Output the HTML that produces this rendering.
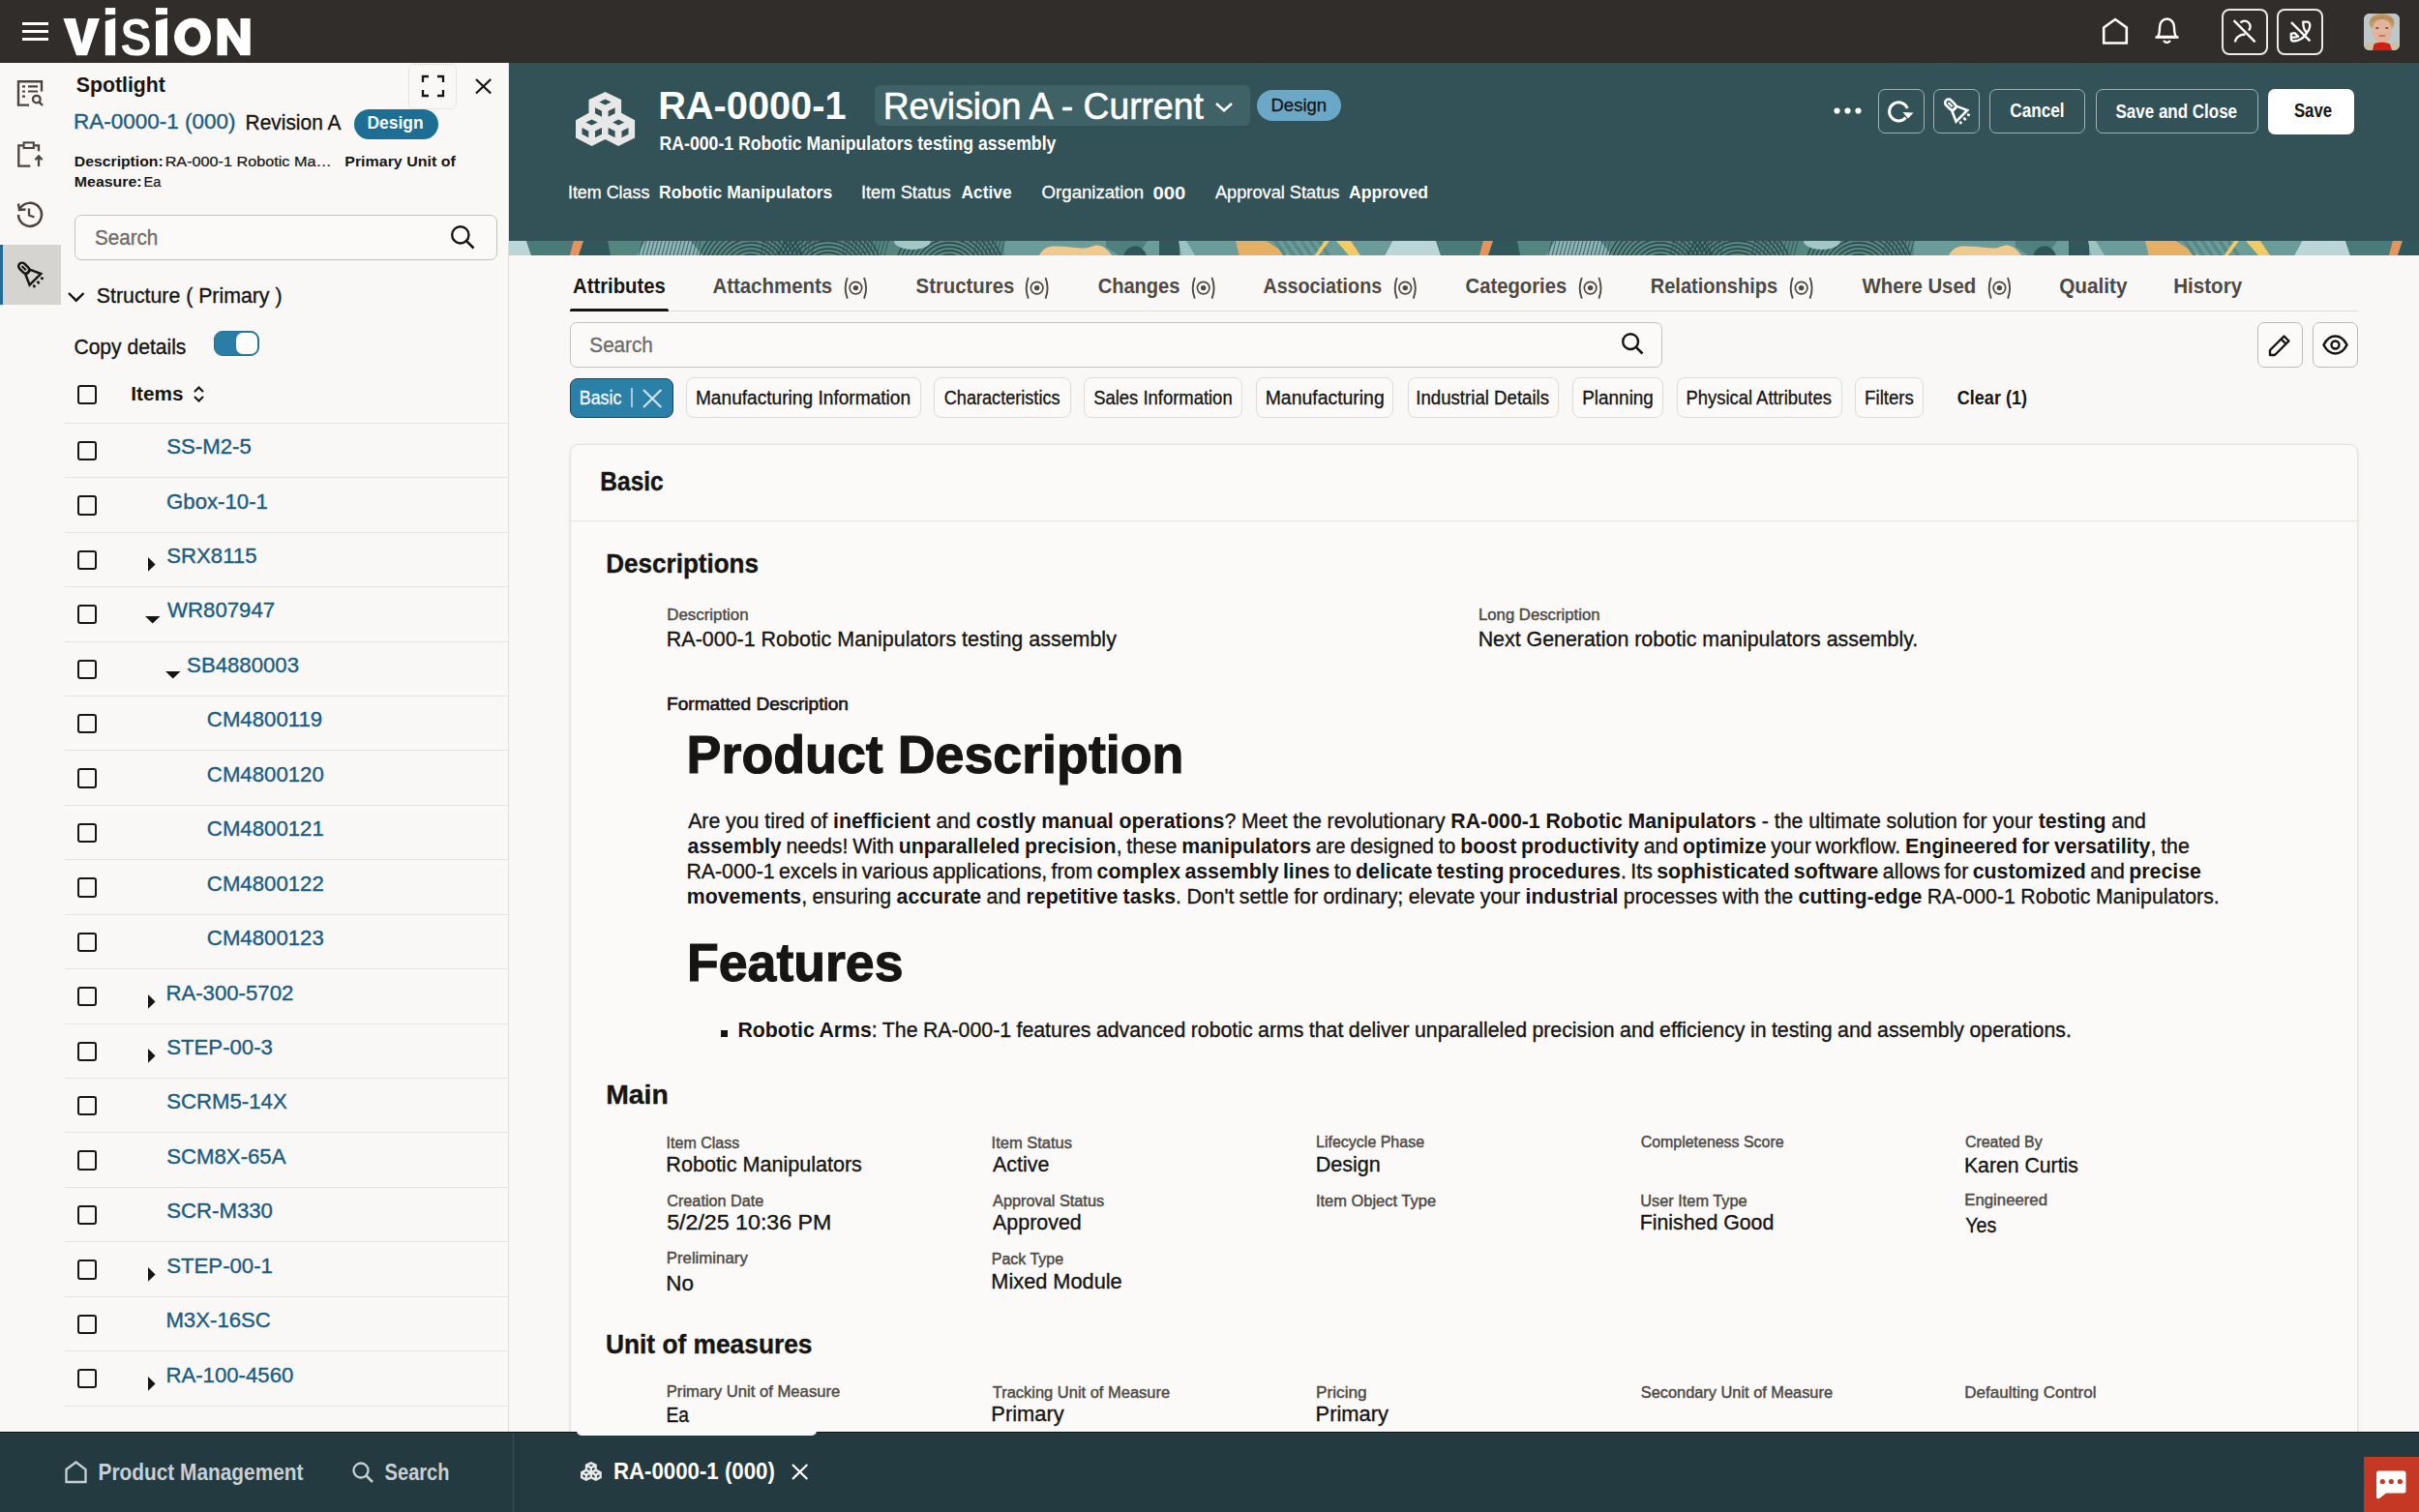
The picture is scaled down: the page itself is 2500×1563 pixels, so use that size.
<!DOCTYPE html><html><head><meta charset="utf-8"><style>
*{box-sizing:border-box;margin:0;padding:0}
html,body{width:2500px;height:1563px;overflow:hidden;background:#f9f8f6;font-family:"Liberation Sans",sans-serif}
.t{position:absolute;white-space:pre}
.a{position:absolute}
b{font-weight:700}
svg{position:absolute;overflow:visible}
</style></head><body><div class="a" style="left:0px;top:0px;width:2500px;height:65px;background:#312d2a"></div><div class="a" style="left:0px;top:65px;width:526px;height:1415px;background:#f9f8f6"></div><div class="a" style="left:0px;top:253px;width:63px;height:62px;background:#d6d4d1"></div><div class="a" style="left:0px;top:253px;width:3px;height:62px;background:#1f6b95"></div><div class="a" style="left:525px;top:65px;width:1px;height:1415px;background:#e3e0dc"></div><div class="a" style="left:526px;top:65px;width:1974px;height:184px;background:#325257"></div><svg style="left:0;top:0" width="2500" height="265"><defs><clipPath id="cp"><rect x="526" y="249" width="1974" height="15"/></clipPath><clipPath id="arcclip"><rect x="188" y="0" width="324" height="15"/></clipPath></defs><g clip-path="url(#cp)"><g transform="translate(526,249)"><rect x="0" y="0" width="940" height="15" fill="#5f918d"/><rect x="100" y="0" width="412" height="15" fill="#55857f"/><rect x="512" y="0" width="401" height="15" fill="#6a9c99"/><polygon points="-26.5,0 18,0 23,15 -34.5,15" fill="#bcd6d8"/><polygon points="913.5,0 958,0 963,15 905.5,15" fill="#bcd6d8"/><polygon points="18,0 67,0 63,15 23,15" fill="#497c79"/><polygon points="67,0 77,0 72,15 63,15" fill="#e8935a"/><polygon points="77,0 102,0 105,15 72,15" fill="#30585b"/><polygon points="141,0 188,0 200,15 132,15" fill="#8db8b7"/><g clip-path="url(#arcclip)"><circle cx="250" cy="34" r="20" fill="none" stroke="#213d3f" stroke-width="1.3" opacity="0.9"/><circle cx="250" cy="34" r="24" fill="none" stroke="#213d3f" stroke-width="1.3" opacity="0.9"/><circle cx="250" cy="34" r="28" fill="none" stroke="#213d3f" stroke-width="1.3" opacity="0.9"/><circle cx="250" cy="34" r="32" fill="none" stroke="#213d3f" stroke-width="1.3" opacity="0.9"/><circle cx="250" cy="34" r="36" fill="none" stroke="#213d3f" stroke-width="1.3" opacity="0.9"/><circle cx="250" cy="34" r="40" fill="none" stroke="#213d3f" stroke-width="1.3" opacity="0.9"/><circle cx="250" cy="34" r="44" fill="none" stroke="#213d3f" stroke-width="1.3" opacity="0.9"/><circle cx="250" cy="34" r="48" fill="none" stroke="#213d3f" stroke-width="1.3" opacity="0.9"/><circle cx="250" cy="34" r="52" fill="none" stroke="#213d3f" stroke-width="1.3" opacity="0.9"/><circle cx="250" cy="34" r="56" fill="none" stroke="#213d3f" stroke-width="1.3" opacity="0.9"/><circle cx="330" cy="36" r="20" fill="none" stroke="#213d3f" stroke-width="1.3" opacity="0.9"/><circle cx="330" cy="36" r="24" fill="none" stroke="#213d3f" stroke-width="1.3" opacity="0.9"/><circle cx="330" cy="36" r="28" fill="none" stroke="#213d3f" stroke-width="1.3" opacity="0.9"/><circle cx="330" cy="36" r="32" fill="none" stroke="#213d3f" stroke-width="1.3" opacity="0.9"/><circle cx="330" cy="36" r="36" fill="none" stroke="#213d3f" stroke-width="1.3" opacity="0.9"/><circle cx="330" cy="36" r="40" fill="none" stroke="#213d3f" stroke-width="1.3" opacity="0.9"/><circle cx="330" cy="36" r="44" fill="none" stroke="#213d3f" stroke-width="1.3" opacity="0.9"/><circle cx="330" cy="36" r="48" fill="none" stroke="#213d3f" stroke-width="1.3" opacity="0.9"/><circle cx="330" cy="36" r="52" fill="none" stroke="#213d3f" stroke-width="1.3" opacity="0.9"/><circle cx="330" cy="36" r="56" fill="none" stroke="#213d3f" stroke-width="1.3" opacity="0.9"/><circle cx="455" cy="34" r="20" fill="none" stroke="#213d3f" stroke-width="1.3" opacity="0.9"/><circle cx="455" cy="34" r="24" fill="none" stroke="#213d3f" stroke-width="1.3" opacity="0.9"/><circle cx="455" cy="34" r="28" fill="none" stroke="#213d3f" stroke-width="1.3" opacity="0.9"/><circle cx="455" cy="34" r="32" fill="none" stroke="#213d3f" stroke-width="1.3" opacity="0.9"/><circle cx="455" cy="34" r="36" fill="none" stroke="#213d3f" stroke-width="1.3" opacity="0.9"/><circle cx="455" cy="34" r="40" fill="none" stroke="#213d3f" stroke-width="1.3" opacity="0.9"/><circle cx="455" cy="34" r="44" fill="none" stroke="#213d3f" stroke-width="1.3" opacity="0.9"/><circle cx="455" cy="34" r="48" fill="none" stroke="#213d3f" stroke-width="1.3" opacity="0.9"/><circle cx="455" cy="34" r="52" fill="none" stroke="#213d3f" stroke-width="1.3" opacity="0.9"/><circle cx="455" cy="34" r="56" fill="none" stroke="#213d3f" stroke-width="1.3" opacity="0.9"/></g><path d="M134,15 L138,0" stroke="#2f5558" stroke-width="1.1" opacity="0.8"/><path d="M138,15 L142,0" stroke="#2f5558" stroke-width="1.1" opacity="0.8"/><path d="M142,15 L146,0" stroke="#2f5558" stroke-width="1.1" opacity="0.8"/><path d="M146,15 L150,0" stroke="#2f5558" stroke-width="1.1" opacity="0.8"/><path d="M150,15 L154,0" stroke="#2f5558" stroke-width="1.1" opacity="0.8"/><path d="M154,15 L158,0" stroke="#2f5558" stroke-width="1.1" opacity="0.8"/><path d="M158,15 L162,0" stroke="#2f5558" stroke-width="1.1" opacity="0.8"/><path d="M162,15 L166,0" stroke="#2f5558" stroke-width="1.1" opacity="0.8"/><path d="M166,15 L170,0" stroke="#2f5558" stroke-width="1.1" opacity="0.8"/><path d="M170,15 L174,0" stroke="#2f5558" stroke-width="1.1" opacity="0.8"/><path d="M174,15 L178,0" stroke="#2f5558" stroke-width="1.1" opacity="0.8"/><path d="M178,15 L182,0" stroke="#2f5558" stroke-width="1.1" opacity="0.8"/><path d="M182,15 L186,0" stroke="#2f5558" stroke-width="1.1" opacity="0.8"/><path d="M186,15 L190,0" stroke="#2f5558" stroke-width="1.1" opacity="0.8"/><path d="M190,15 L194,0" stroke="#2f5558" stroke-width="1.1" opacity="0.8"/><path d="M194,15 L198,0" stroke="#2f5558" stroke-width="1.1" opacity="0.8"/><path d="M260,15 L264,0" stroke="#2f5558" stroke-width="1.1" opacity="0.8"/><path d="M264,15 L268,0" stroke="#2f5558" stroke-width="1.1" opacity="0.8"/><path d="M268,15 L272,0" stroke="#2f5558" stroke-width="1.1" opacity="0.8"/><path d="M272,15 L276,0" stroke="#2f5558" stroke-width="1.1" opacity="0.8"/><path d="M276,15 L280,0" stroke="#2f5558" stroke-width="1.1" opacity="0.8"/><path d="M280,15 L284,0" stroke="#2f5558" stroke-width="1.1" opacity="0.8"/><path d="M284,15 L288,0" stroke="#2f5558" stroke-width="1.1" opacity="0.8"/><path d="M288,15 L292,0" stroke="#2f5558" stroke-width="1.1" opacity="0.8"/><path d="M292,15 L296,0" stroke="#2f5558" stroke-width="1.1" opacity="0.8"/><path d="M296,15 L300,0" stroke="#2f5558" stroke-width="1.1" opacity="0.8"/><path d="M300,15 L304,0" stroke="#2f5558" stroke-width="1.1" opacity="0.8"/><path d="M304,15 L308,0" stroke="#2f5558" stroke-width="1.1" opacity="0.8"/><path d="M308,15 L312,0" stroke="#2f5558" stroke-width="1.1" opacity="0.8"/><path d="M312,15 L316,0" stroke="#2f5558" stroke-width="1.1" opacity="0.8"/><path d="M344,15 L348,0" stroke="#2f5558" stroke-width="1.1" opacity="0.8"/><path d="M348,15 L352,0" stroke="#2f5558" stroke-width="1.1" opacity="0.8"/><path d="M352,15 L356,0" stroke="#2f5558" stroke-width="1.1" opacity="0.8"/><path d="M356,15 L360,0" stroke="#2f5558" stroke-width="1.1" opacity="0.8"/><path d="M360,15 L364,0" stroke="#2f5558" stroke-width="1.1" opacity="0.8"/><path d="M364,15 L368,0" stroke="#2f5558" stroke-width="1.1" opacity="0.8"/><path d="M368,15 L372,0" stroke="#2f5558" stroke-width="1.1" opacity="0.8"/><path d="M372,15 L376,0" stroke="#2f5558" stroke-width="1.1" opacity="0.8"/><path d="M376,15 L380,0" stroke="#2f5558" stroke-width="1.1" opacity="0.8"/><path d="M380,15 L384,0" stroke="#2f5558" stroke-width="1.1" opacity="0.8"/><path d="M384,15 L388,0" stroke="#2f5558" stroke-width="1.1" opacity="0.8"/><path d="M388,15 L392,0" stroke="#2f5558" stroke-width="1.1" opacity="0.8"/><path d="M480,15 L484,0" stroke="#2f5558" stroke-width="1.1" opacity="0.8"/><path d="M484,15 L488,0" stroke="#2f5558" stroke-width="1.1" opacity="0.8"/><path d="M488,15 L492,0" stroke="#2f5558" stroke-width="1.1" opacity="0.8"/><path d="M492,15 L496,0" stroke="#2f5558" stroke-width="1.1" opacity="0.8"/><path d="M496,15 L500,0" stroke="#2f5558" stroke-width="1.1" opacity="0.8"/><path d="M500,15 L504,0" stroke="#2f5558" stroke-width="1.1" opacity="0.8"/><path d="M504,15 L508,0" stroke="#2f5558" stroke-width="1.1" opacity="0.8"/><path d="M508,15 L512,0" stroke="#2f5558" stroke-width="1.1" opacity="0.8"/><ellipse cx="417" cy="0" rx="19" ry="9" fill="#a3c6c6"/><path d="M548,15 C552,8 556,6 562,5.5 C575,5 585,7.5 595,7.5 C600,7.5 603,4.5 608,4.5 C614,4.5 620,10 623,15 Z" fill="#efc98f"/><polygon points="617,0 672,0 672,15 630,15 617,6" fill="#4f807d"/><polygon points="660,0 672,0 672,15 650,15" fill="#6a9c99"/><path d="M635,15 C638,8 642,5.5 647,5.5 C652,5.5 656,8 659,15 Z" fill="#2f5558"/><polygon points="672,0 693,0 693,15 672,15" fill="#30585b"/><polygon points="692,0 700,0 709,15 695,15" fill="#9cc2c2"/><polygon points="751,0 782.5,0 806.3,15 754.7,15" fill="#e5b066"/><polygon points="790,0 794,0 804,15 800,15" fill="#578985"/><polygon points="799,0 803,0 813,15 809,15" fill="#578985"/><polygon points="808,0 812,0 822,15 818,15" fill="#578985"/><polygon points="817,0 821,0 831,15 827,15" fill="#578985"/><polygon points="826,0 830,0 840,15 836,15" fill="#578985"/><polygon points="835,0 839,0 849,15 845,15" fill="#578985"/><polygon points="843,0 848,0 837,15 832.6,15" fill="#f2cb66"/><polygon points="855,0 870,0 880,15 868,15" fill="#f2cb66"/></g><g transform="translate(1466,249)"><rect x="0" y="0" width="940" height="15" fill="#5f918d"/><rect x="100" y="0" width="412" height="15" fill="#55857f"/><rect x="512" y="0" width="401" height="15" fill="#6a9c99"/><polygon points="-26.5,0 18,0 23,15 -34.5,15" fill="#bcd6d8"/><polygon points="913.5,0 958,0 963,15 905.5,15" fill="#bcd6d8"/><polygon points="18,0 67,0 63,15 23,15" fill="#497c79"/><polygon points="67,0 77,0 72,15 63,15" fill="#e8935a"/><polygon points="77,0 102,0 105,15 72,15" fill="#30585b"/><polygon points="141,0 188,0 200,15 132,15" fill="#8db8b7"/><g clip-path="url(#arcclip)"><circle cx="250" cy="34" r="20" fill="none" stroke="#213d3f" stroke-width="1.3" opacity="0.9"/><circle cx="250" cy="34" r="24" fill="none" stroke="#213d3f" stroke-width="1.3" opacity="0.9"/><circle cx="250" cy="34" r="28" fill="none" stroke="#213d3f" stroke-width="1.3" opacity="0.9"/><circle cx="250" cy="34" r="32" fill="none" stroke="#213d3f" stroke-width="1.3" opacity="0.9"/><circle cx="250" cy="34" r="36" fill="none" stroke="#213d3f" stroke-width="1.3" opacity="0.9"/><circle cx="250" cy="34" r="40" fill="none" stroke="#213d3f" stroke-width="1.3" opacity="0.9"/><circle cx="250" cy="34" r="44" fill="none" stroke="#213d3f" stroke-width="1.3" opacity="0.9"/><circle cx="250" cy="34" r="48" fill="none" stroke="#213d3f" stroke-width="1.3" opacity="0.9"/><circle cx="250" cy="34" r="52" fill="none" stroke="#213d3f" stroke-width="1.3" opacity="0.9"/><circle cx="250" cy="34" r="56" fill="none" stroke="#213d3f" stroke-width="1.3" opacity="0.9"/><circle cx="330" cy="36" r="20" fill="none" stroke="#213d3f" stroke-width="1.3" opacity="0.9"/><circle cx="330" cy="36" r="24" fill="none" stroke="#213d3f" stroke-width="1.3" opacity="0.9"/><circle cx="330" cy="36" r="28" fill="none" stroke="#213d3f" stroke-width="1.3" opacity="0.9"/><circle cx="330" cy="36" r="32" fill="none" stroke="#213d3f" stroke-width="1.3" opacity="0.9"/><circle cx="330" cy="36" r="36" fill="none" stroke="#213d3f" stroke-width="1.3" opacity="0.9"/><circle cx="330" cy="36" r="40" fill="none" stroke="#213d3f" stroke-width="1.3" opacity="0.9"/><circle cx="330" cy="36" r="44" fill="none" stroke="#213d3f" stroke-width="1.3" opacity="0.9"/><circle cx="330" cy="36" r="48" fill="none" stroke="#213d3f" stroke-width="1.3" opacity="0.9"/><circle cx="330" cy="36" r="52" fill="none" stroke="#213d3f" stroke-width="1.3" opacity="0.9"/><circle cx="330" cy="36" r="56" fill="none" stroke="#213d3f" stroke-width="1.3" opacity="0.9"/><circle cx="455" cy="34" r="20" fill="none" stroke="#213d3f" stroke-width="1.3" opacity="0.9"/><circle cx="455" cy="34" r="24" fill="none" stroke="#213d3f" stroke-width="1.3" opacity="0.9"/><circle cx="455" cy="34" r="28" fill="none" stroke="#213d3f" stroke-width="1.3" opacity="0.9"/><circle cx="455" cy="34" r="32" fill="none" stroke="#213d3f" stroke-width="1.3" opacity="0.9"/><circle cx="455" cy="34" r="36" fill="none" stroke="#213d3f" stroke-width="1.3" opacity="0.9"/><circle cx="455" cy="34" r="40" fill="none" stroke="#213d3f" stroke-width="1.3" opacity="0.9"/><circle cx="455" cy="34" r="44" fill="none" stroke="#213d3f" stroke-width="1.3" opacity="0.9"/><circle cx="455" cy="34" r="48" fill="none" stroke="#213d3f" stroke-width="1.3" opacity="0.9"/><circle cx="455" cy="34" r="52" fill="none" stroke="#213d3f" stroke-width="1.3" opacity="0.9"/><circle cx="455" cy="34" r="56" fill="none" stroke="#213d3f" stroke-width="1.3" opacity="0.9"/></g><path d="M134,15 L138,0" stroke="#2f5558" stroke-width="1.1" opacity="0.8"/><path d="M138,15 L142,0" stroke="#2f5558" stroke-width="1.1" opacity="0.8"/><path d="M142,15 L146,0" stroke="#2f5558" stroke-width="1.1" opacity="0.8"/><path d="M146,15 L150,0" stroke="#2f5558" stroke-width="1.1" opacity="0.8"/><path d="M150,15 L154,0" stroke="#2f5558" stroke-width="1.1" opacity="0.8"/><path d="M154,15 L158,0" stroke="#2f5558" stroke-width="1.1" opacity="0.8"/><path d="M158,15 L162,0" stroke="#2f5558" stroke-width="1.1" opacity="0.8"/><path d="M162,15 L166,0" stroke="#2f5558" stroke-width="1.1" opacity="0.8"/><path d="M166,15 L170,0" stroke="#2f5558" stroke-width="1.1" opacity="0.8"/><path d="M170,15 L174,0" stroke="#2f5558" stroke-width="1.1" opacity="0.8"/><path d="M174,15 L178,0" stroke="#2f5558" stroke-width="1.1" opacity="0.8"/><path d="M178,15 L182,0" stroke="#2f5558" stroke-width="1.1" opacity="0.8"/><path d="M182,15 L186,0" stroke="#2f5558" stroke-width="1.1" opacity="0.8"/><path d="M186,15 L190,0" stroke="#2f5558" stroke-width="1.1" opacity="0.8"/><path d="M190,15 L194,0" stroke="#2f5558" stroke-width="1.1" opacity="0.8"/><path d="M194,15 L198,0" stroke="#2f5558" stroke-width="1.1" opacity="0.8"/><path d="M260,15 L264,0" stroke="#2f5558" stroke-width="1.1" opacity="0.8"/><path d="M264,15 L268,0" stroke="#2f5558" stroke-width="1.1" opacity="0.8"/><path d="M268,15 L272,0" stroke="#2f5558" stroke-width="1.1" opacity="0.8"/><path d="M272,15 L276,0" stroke="#2f5558" stroke-width="1.1" opacity="0.8"/><path d="M276,15 L280,0" stroke="#2f5558" stroke-width="1.1" opacity="0.8"/><path d="M280,15 L284,0" stroke="#2f5558" stroke-width="1.1" opacity="0.8"/><path d="M284,15 L288,0" stroke="#2f5558" stroke-width="1.1" opacity="0.8"/><path d="M288,15 L292,0" stroke="#2f5558" stroke-width="1.1" opacity="0.8"/><path d="M292,15 L296,0" stroke="#2f5558" stroke-width="1.1" opacity="0.8"/><path d="M296,15 L300,0" stroke="#2f5558" stroke-width="1.1" opacity="0.8"/><path d="M300,15 L304,0" stroke="#2f5558" stroke-width="1.1" opacity="0.8"/><path d="M304,15 L308,0" stroke="#2f5558" stroke-width="1.1" opacity="0.8"/><path d="M308,15 L312,0" stroke="#2f5558" stroke-width="1.1" opacity="0.8"/><path d="M312,15 L316,0" stroke="#2f5558" stroke-width="1.1" opacity="0.8"/><path d="M344,15 L348,0" stroke="#2f5558" stroke-width="1.1" opacity="0.8"/><path d="M348,15 L352,0" stroke="#2f5558" stroke-width="1.1" opacity="0.8"/><path d="M352,15 L356,0" stroke="#2f5558" stroke-width="1.1" opacity="0.8"/><path d="M356,15 L360,0" stroke="#2f5558" stroke-width="1.1" opacity="0.8"/><path d="M360,15 L364,0" stroke="#2f5558" stroke-width="1.1" opacity="0.8"/><path d="M364,15 L368,0" stroke="#2f5558" stroke-width="1.1" opacity="0.8"/><path d="M368,15 L372,0" stroke="#2f5558" stroke-width="1.1" opacity="0.8"/><path d="M372,15 L376,0" stroke="#2f5558" stroke-width="1.1" opacity="0.8"/><path d="M376,15 L380,0" stroke="#2f5558" stroke-width="1.1" opacity="0.8"/><path d="M380,15 L384,0" stroke="#2f5558" stroke-width="1.1" opacity="0.8"/><path d="M384,15 L388,0" stroke="#2f5558" stroke-width="1.1" opacity="0.8"/><path d="M388,15 L392,0" stroke="#2f5558" stroke-width="1.1" opacity="0.8"/><path d="M480,15 L484,0" stroke="#2f5558" stroke-width="1.1" opacity="0.8"/><path d="M484,15 L488,0" stroke="#2f5558" stroke-width="1.1" opacity="0.8"/><path d="M488,15 L492,0" stroke="#2f5558" stroke-width="1.1" opacity="0.8"/><path d="M492,15 L496,0" stroke="#2f5558" stroke-width="1.1" opacity="0.8"/><path d="M496,15 L500,0" stroke="#2f5558" stroke-width="1.1" opacity="0.8"/><path d="M500,15 L504,0" stroke="#2f5558" stroke-width="1.1" opacity="0.8"/><path d="M504,15 L508,0" stroke="#2f5558" stroke-width="1.1" opacity="0.8"/><path d="M508,15 L512,0" stroke="#2f5558" stroke-width="1.1" opacity="0.8"/><ellipse cx="417" cy="0" rx="19" ry="9" fill="#a3c6c6"/><path d="M548,15 C552,8 556,6 562,5.5 C575,5 585,7.5 595,7.5 C600,7.5 603,4.5 608,4.5 C614,4.5 620,10 623,15 Z" fill="#efc98f"/><polygon points="617,0 672,0 672,15 630,15 617,6" fill="#4f807d"/><polygon points="660,0 672,0 672,15 650,15" fill="#6a9c99"/><path d="M635,15 C638,8 642,5.5 647,5.5 C652,5.5 656,8 659,15 Z" fill="#2f5558"/><polygon points="672,0 693,0 693,15 672,15" fill="#30585b"/><polygon points="692,0 700,0 709,15 695,15" fill="#9cc2c2"/><polygon points="751,0 782.5,0 806.3,15 754.7,15" fill="#e5b066"/><polygon points="790,0 794,0 804,15 800,15" fill="#578985"/><polygon points="799,0 803,0 813,15 809,15" fill="#578985"/><polygon points="808,0 812,0 822,15 818,15" fill="#578985"/><polygon points="817,0 821,0 831,15 827,15" fill="#578985"/><polygon points="826,0 830,0 840,15 836,15" fill="#578985"/><polygon points="835,0 839,0 849,15 845,15" fill="#578985"/><polygon points="843,0 848,0 837,15 832.6,15" fill="#f2cb66"/><polygon points="855,0 870,0 880,15 868,15" fill="#f2cb66"/></g><g transform="translate(2406,249)"><rect x="0" y="0" width="940" height="15" fill="#5f918d"/><rect x="100" y="0" width="412" height="15" fill="#55857f"/><rect x="512" y="0" width="401" height="15" fill="#6a9c99"/><polygon points="-26.5,0 18,0 23,15 -34.5,15" fill="#bcd6d8"/><polygon points="913.5,0 958,0 963,15 905.5,15" fill="#bcd6d8"/><polygon points="18,0 67,0 63,15 23,15" fill="#497c79"/><polygon points="67,0 77,0 72,15 63,15" fill="#e8935a"/><polygon points="77,0 102,0 105,15 72,15" fill="#30585b"/><polygon points="141,0 188,0 200,15 132,15" fill="#8db8b7"/><g clip-path="url(#arcclip)"><circle cx="250" cy="34" r="20" fill="none" stroke="#213d3f" stroke-width="1.3" opacity="0.9"/><circle cx="250" cy="34" r="24" fill="none" stroke="#213d3f" stroke-width="1.3" opacity="0.9"/><circle cx="250" cy="34" r="28" fill="none" stroke="#213d3f" stroke-width="1.3" opacity="0.9"/><circle cx="250" cy="34" r="32" fill="none" stroke="#213d3f" stroke-width="1.3" opacity="0.9"/><circle cx="250" cy="34" r="36" fill="none" stroke="#213d3f" stroke-width="1.3" opacity="0.9"/><circle cx="250" cy="34" r="40" fill="none" stroke="#213d3f" stroke-width="1.3" opacity="0.9"/><circle cx="250" cy="34" r="44" fill="none" stroke="#213d3f" stroke-width="1.3" opacity="0.9"/><circle cx="250" cy="34" r="48" fill="none" stroke="#213d3f" stroke-width="1.3" opacity="0.9"/><circle cx="250" cy="34" r="52" fill="none" stroke="#213d3f" stroke-width="1.3" opacity="0.9"/><circle cx="250" cy="34" r="56" fill="none" stroke="#213d3f" stroke-width="1.3" opacity="0.9"/><circle cx="330" cy="36" r="20" fill="none" stroke="#213d3f" stroke-width="1.3" opacity="0.9"/><circle cx="330" cy="36" r="24" fill="none" stroke="#213d3f" stroke-width="1.3" opacity="0.9"/><circle cx="330" cy="36" r="28" fill="none" stroke="#213d3f" stroke-width="1.3" opacity="0.9"/><circle cx="330" cy="36" r="32" fill="none" stroke="#213d3f" stroke-width="1.3" opacity="0.9"/><circle cx="330" cy="36" r="36" fill="none" stroke="#213d3f" stroke-width="1.3" opacity="0.9"/><circle cx="330" cy="36" r="40" fill="none" stroke="#213d3f" stroke-width="1.3" opacity="0.9"/><circle cx="330" cy="36" r="44" fill="none" stroke="#213d3f" stroke-width="1.3" opacity="0.9"/><circle cx="330" cy="36" r="48" fill="none" stroke="#213d3f" stroke-width="1.3" opacity="0.9"/><circle cx="330" cy="36" r="52" fill="none" stroke="#213d3f" stroke-width="1.3" opacity="0.9"/><circle cx="330" cy="36" r="56" fill="none" stroke="#213d3f" stroke-width="1.3" opacity="0.9"/><circle cx="455" cy="34" r="20" fill="none" stroke="#213d3f" stroke-width="1.3" opacity="0.9"/><circle cx="455" cy="34" r="24" fill="none" stroke="#213d3f" stroke-width="1.3" opacity="0.9"/><circle cx="455" cy="34" r="28" fill="none" stroke="#213d3f" stroke-width="1.3" opacity="0.9"/><circle cx="455" cy="34" r="32" fill="none" stroke="#213d3f" stroke-width="1.3" opacity="0.9"/><circle cx="455" cy="34" r="36" fill="none" stroke="#213d3f" stroke-width="1.3" opacity="0.9"/><circle cx="455" cy="34" r="40" fill="none" stroke="#213d3f" stroke-width="1.3" opacity="0.9"/><circle cx="455" cy="34" r="44" fill="none" stroke="#213d3f" stroke-width="1.3" opacity="0.9"/><circle cx="455" cy="34" r="48" fill="none" stroke="#213d3f" stroke-width="1.3" opacity="0.9"/><circle cx="455" cy="34" r="52" fill="none" stroke="#213d3f" stroke-width="1.3" opacity="0.9"/><circle cx="455" cy="34" r="56" fill="none" stroke="#213d3f" stroke-width="1.3" opacity="0.9"/></g><path d="M134,15 L138,0" stroke="#2f5558" stroke-width="1.1" opacity="0.8"/><path d="M138,15 L142,0" stroke="#2f5558" stroke-width="1.1" opacity="0.8"/><path d="M142,15 L146,0" stroke="#2f5558" stroke-width="1.1" opacity="0.8"/><path d="M146,15 L150,0" stroke="#2f5558" stroke-width="1.1" opacity="0.8"/><path d="M150,15 L154,0" stroke="#2f5558" stroke-width="1.1" opacity="0.8"/><path d="M154,15 L158,0" stroke="#2f5558" stroke-width="1.1" opacity="0.8"/><path d="M158,15 L162,0" stroke="#2f5558" stroke-width="1.1" opacity="0.8"/><path d="M162,15 L166,0" stroke="#2f5558" stroke-width="1.1" opacity="0.8"/><path d="M166,15 L170,0" stroke="#2f5558" stroke-width="1.1" opacity="0.8"/><path d="M170,15 L174,0" stroke="#2f5558" stroke-width="1.1" opacity="0.8"/><path d="M174,15 L178,0" stroke="#2f5558" stroke-width="1.1" opacity="0.8"/><path d="M178,15 L182,0" stroke="#2f5558" stroke-width="1.1" opacity="0.8"/><path d="M182,15 L186,0" stroke="#2f5558" stroke-width="1.1" opacity="0.8"/><path d="M186,15 L190,0" stroke="#2f5558" stroke-width="1.1" opacity="0.8"/><path d="M190,15 L194,0" stroke="#2f5558" stroke-width="1.1" opacity="0.8"/><path d="M194,15 L198,0" stroke="#2f5558" stroke-width="1.1" opacity="0.8"/><path d="M260,15 L264,0" stroke="#2f5558" stroke-width="1.1" opacity="0.8"/><path d="M264,15 L268,0" stroke="#2f5558" stroke-width="1.1" opacity="0.8"/><path d="M268,15 L272,0" stroke="#2f5558" stroke-width="1.1" opacity="0.8"/><path d="M272,15 L276,0" stroke="#2f5558" stroke-width="1.1" opacity="0.8"/><path d="M276,15 L280,0" stroke="#2f5558" stroke-width="1.1" opacity="0.8"/><path d="M280,15 L284,0" stroke="#2f5558" stroke-width="1.1" opacity="0.8"/><path d="M284,15 L288,0" stroke="#2f5558" stroke-width="1.1" opacity="0.8"/><path d="M288,15 L292,0" stroke="#2f5558" stroke-width="1.1" opacity="0.8"/><path d="M292,15 L296,0" stroke="#2f5558" stroke-width="1.1" opacity="0.8"/><path d="M296,15 L300,0" stroke="#2f5558" stroke-width="1.1" opacity="0.8"/><path d="M300,15 L304,0" stroke="#2f5558" stroke-width="1.1" opacity="0.8"/><path d="M304,15 L308,0" stroke="#2f5558" stroke-width="1.1" opacity="0.8"/><path d="M308,15 L312,0" stroke="#2f5558" stroke-width="1.1" opacity="0.8"/><path d="M312,15 L316,0" stroke="#2f5558" stroke-width="1.1" opacity="0.8"/><path d="M344,15 L348,0" stroke="#2f5558" stroke-width="1.1" opacity="0.8"/><path d="M348,15 L352,0" stroke="#2f5558" stroke-width="1.1" opacity="0.8"/><path d="M352,15 L356,0" stroke="#2f5558" stroke-width="1.1" opacity="0.8"/><path d="M356,15 L360,0" stroke="#2f5558" stroke-width="1.1" opacity="0.8"/><path d="M360,15 L364,0" stroke="#2f5558" stroke-width="1.1" opacity="0.8"/><path d="M364,15 L368,0" stroke="#2f5558" stroke-width="1.1" opacity="0.8"/><path d="M368,15 L372,0" stroke="#2f5558" stroke-width="1.1" opacity="0.8"/><path d="M372,15 L376,0" stroke="#2f5558" stroke-width="1.1" opacity="0.8"/><path d="M376,15 L380,0" stroke="#2f5558" stroke-width="1.1" opacity="0.8"/><path d="M380,15 L384,0" stroke="#2f5558" stroke-width="1.1" opacity="0.8"/><path d="M384,15 L388,0" stroke="#2f5558" stroke-width="1.1" opacity="0.8"/><path d="M388,15 L392,0" stroke="#2f5558" stroke-width="1.1" opacity="0.8"/><path d="M480,15 L484,0" stroke="#2f5558" stroke-width="1.1" opacity="0.8"/><path d="M484,15 L488,0" stroke="#2f5558" stroke-width="1.1" opacity="0.8"/><path d="M488,15 L492,0" stroke="#2f5558" stroke-width="1.1" opacity="0.8"/><path d="M492,15 L496,0" stroke="#2f5558" stroke-width="1.1" opacity="0.8"/><path d="M496,15 L500,0" stroke="#2f5558" stroke-width="1.1" opacity="0.8"/><path d="M500,15 L504,0" stroke="#2f5558" stroke-width="1.1" opacity="0.8"/><path d="M504,15 L508,0" stroke="#2f5558" stroke-width="1.1" opacity="0.8"/><path d="M508,15 L512,0" stroke="#2f5558" stroke-width="1.1" opacity="0.8"/><ellipse cx="417" cy="0" rx="19" ry="9" fill="#a3c6c6"/><path d="M548,15 C552,8 556,6 562,5.5 C575,5 585,7.5 595,7.5 C600,7.5 603,4.5 608,4.5 C614,4.5 620,10 623,15 Z" fill="#efc98f"/><polygon points="617,0 672,0 672,15 630,15 617,6" fill="#4f807d"/><polygon points="660,0 672,0 672,15 650,15" fill="#6a9c99"/><path d="M635,15 C638,8 642,5.5 647,5.5 C652,5.5 656,8 659,15 Z" fill="#2f5558"/><polygon points="672,0 693,0 693,15 672,15" fill="#30585b"/><polygon points="692,0 700,0 709,15 695,15" fill="#9cc2c2"/><polygon points="751,0 782.5,0 806.3,15 754.7,15" fill="#e5b066"/><polygon points="790,0 794,0 804,15 800,15" fill="#578985"/><polygon points="799,0 803,0 813,15 809,15" fill="#578985"/><polygon points="808,0 812,0 822,15 818,15" fill="#578985"/><polygon points="817,0 821,0 831,15 827,15" fill="#578985"/><polygon points="826,0 830,0 840,15 836,15" fill="#578985"/><polygon points="835,0 839,0 849,15 845,15" fill="#578985"/><polygon points="843,0 848,0 837,15 832.6,15" fill="#f2cb66"/><polygon points="855,0 870,0 880,15 868,15" fill="#f2cb66"/></g></g></svg><div class="a" style="left:526px;top:264px;width:1974px;height:1216px;background:#f9f8f6"></div><div class="a" style="left:0px;top:1480px;width:2500px;height:83px;background:#233a40"></div><div class="a" style="left:0px;top:1480px;width:2500px;height:1px;background:#0d1417"></div><div class="a" style="left:530px;top:1481px;width:1px;height:82px;background:#3a5057"></div><svg style="left:23px;top:23px;" width="27" height="19"><rect x="0" y="0" width="27" height="3" fill="#fff"/><rect x="0" y="8" width="27" height="3" fill="#fff"/><rect x="0" y="16" width="27" height="3" fill="#fff"/></svg><svg style="left:0;top:0" width="300" height="65"><polygon points="65.4,19 78,19 84.5,45 91,19 103,19 90,57.3 79,57.3" fill="#ffffff"/><polygon points="108.8,22 119.2,18.5 119.2,57.3 108.8,57.3" fill="#ffffff"/><rect x="108.8" y="8.1" width="10.400000000000006" height="7" fill="#ffffff"/><polygon points="161,22 173,18.5 173,57.3 161,57.3" fill="#ffffff"/><rect x="161" y="8.1" width="12" height="7" fill="#ffffff"/><text x="124.5" y="57.3" font-family="Liberation Sans" font-weight="700" font-size="53" textLength="32" lengthAdjust="spacingAndGlyphs" fill="#ffffff">S</text><ellipse cx="199" cy="38.2" rx="19" ry="19.4" fill="#ffffff"/><ellipse cx="199" cy="38.2" rx="8.2" ry="10.3" fill="#312d2a"/><polygon points="224.5,19 235,19 248.5,40 248.5,19 258.7,19 258.7,57.3 248.5,57.3 234.8,36 234.8,57.3 224.5,57.3" fill="#ffffff"/></svg><svg style="left:2172px;top:18px;" width="30" height="30"><path d="M2.2,10.5 L14,2 L25.8,10.5 L25.8,26.5 L2.2,26.5 Z" fill="none" stroke="#ffffff" stroke-width="2.6" stroke-linejoin="miter"/></svg><svg style="left:2226px;top:17px;" width="28" height="30"><path d="M4,21 C6,18 6,15 6,11 C6,6 9.5,2.5 13.5,2.5 C17.5,2.5 21,6 21,11 C21,15 21,18 23,21 Z" fill="none" stroke="#fff" stroke-width="2.4" stroke-linejoin="round"/><path d="M1.5,21.5 L25.5,21.5" stroke="#fff" stroke-width="2.6"/><path d="M10,25 Q13.5,29 17,25" fill="none" stroke="#fff" stroke-width="2.4"/></svg><div class="a" style="left:2296px;top:9px;width:48px;height:47.5px;border:2px solid #e9e9e9;border-radius:8px"></div><div class="a" style="left:2352.5px;top:9px;width:48px;height:47.5px;border:2px solid #e9e9e9;border-radius:8px"></div><svg style="left:2303px;top:17px;" width="34" height="32"><path d="M12.5,6.5 A5.8,5.8 0 1 1 21,14.5" fill="none" stroke="#fff" stroke-width="2.4"/><path d="M7,26.5 C7.5,21.5 12,18.5 17.5,18.5" fill="none" stroke="#fff" stroke-width="2.4"/><path d="M5.6,4.2 L27.6,26.3" stroke="#fff" stroke-width="2.4"/></svg><svg style="left:2360px;top:17px;" width="34" height="32"><path d="M20.2,5.6 L25,5.6 C27.6,6.2 28,10 26.2,13.6 L24,17.2 L21.6,13.4 C20.6,11.4 20.2,9.2 20.2,5.6 Z" fill="none" stroke="#fff" stroke-width="2.3" stroke-linejoin="round"/><path d="M24,17.2 C21,22 16,25.5 10.5,25.5 C8.5,25.5 7.8,24.5 7.8,23 L7.8,17.8 L11.5,17.2 L15.2,20.6 C13,21.6 10.6,21.8 8.2,21.4" fill="none" stroke="#fff" stroke-width="2.3" stroke-linejoin="round"/><path d="M8,6.2 L27.4,25.3" stroke="#fff" stroke-width="2.4"/></svg><div class="a" style="left:2442.6px;top:13.6px;width:37.4px;height:38.1px;border-radius:6px;overflow:hidden;background:#bfc9cb"><svg style="left:0;top:0" width="38" height="38"><rect x="0" y="0" width="38" height="38" fill="#bdc8cb"/><path d="M0,38 L0,32 L9,29 L10,38 Z M38,38 L38,32 L29,29 L28,38 Z" fill="#cbbf9f"/><ellipse cx="18.6" cy="9.5" rx="13" ry="9.5" fill="#c39b66"/><ellipse cx="18.8" cy="18" rx="10.3" ry="12.3" fill="#e3b49c"/><path d="M7,10 C10,5 26,4 31,11 L30,6 C26,1 12,1 7,6 Z" fill="#b98d58"/><ellipse cx="13.8" cy="15" rx="1.6" ry="0.9" fill="#6e4c3c"/><ellipse cx="23.8" cy="15" rx="1.6" ry="0.9" fill="#6e4c3c"/><rect x="15.5" y="22.3" width="7" height="1.4" rx="0.7" fill="#b86a60"/><path d="M9,38 L10.5,31.5 C14,29 23,29 27,31.5 L29,38 Z" fill="#d11f16"/></svg></div><svg style="left:17px;top:82px;" width="30" height="30"><path d="M13,26.6 L2,26.6 L2,2.2 L26,2.2 L26,12.5" fill="none" stroke="#49443f" stroke-width="2.4"/><path d="M6,7.4 L9,7.4 M12,7.4 L22,7.4 M6,12.5 L9,12.5 M12,12.5 L22,12.5 M6,17.6 L9,17.6" stroke="#49443f" stroke-width="2.2"/><circle cx="20.8" cy="20.6" r="3.8" fill="none" stroke="#49443f" stroke-width="2.3"/><path d="M23.5,23.4 L27,27" stroke="#49443f" stroke-width="2.4"/></svg><svg style="left:17px;top:145px;" width="30" height="30"><path d="M6.8,5.4 L2.3,5.4 L2.3,26.6 L14.3,26.6 M18.6,5.4 L23,5.4 L23,11.3" fill="none" stroke="#49443f" stroke-width="2.3"/><rect x="7.6" y="2.4" width="10.2" height="5.6" fill="none" stroke="#49443f" stroke-width="2.1"/><path d="M23,27 L23,16.4 M19.4,20.2 L23,16.4 L26.6,20.2" fill="none" stroke="#49443f" stroke-width="2.3"/></svg><svg style="left:17px;top:207px;" width="30" height="30"><path d="M3.5,9 A12,12 0 1 1 2,15" fill="none" stroke="#49443f" stroke-width="2.5"/><path d="M2,3.5 L3,10 L9.5,9.5" fill="none" stroke="#49443f" stroke-width="2.4"/><path d="M13,8.5 L13,15.5 L18.5,17.5" fill="none" stroke="#49443f" stroke-width="2.3"/></svg><svg style="left:17.5px;top:271px;" width="27" height="27"><g transform="translate(13.6,13) rotate(-45)"><rect x="-3.6" y="-16" width="7.2" height="12.5" rx="3.6" fill="none" stroke="#161513" stroke-width="2.5"/><path d="M0,-12.8 L0,-6.8" stroke="#161513" stroke-width="2.125"/><path d="M-3.6,-3.6 L3.6,-3.6 L8.2,6.8 L-8.2,6.8 Z" fill="none" stroke="#161513" stroke-width="2.5" stroke-linejoin="miter"/><path d="M0,9.6 L0,12.8 M-5.2,9.6 L-6.2,12.4 M5.2,9.6 L6.2,12.4" stroke="#161513" stroke-width="2.5"/></g></svg><div class="t" style="left:78.79px;top:77.98px;font-size:21.28px;line-height:21.28px;font-weight:700;color:#161513;">Spotlight</div><div class="a" style="left:421.8px;top:65.5px;width:50.5px;height:47.5px;border:1px dotted #d4d1cd;border-radius:6px"></div><svg style="left:436px;top:78px;" width="23" height="22"><path d="M1,7 L1,1 L7,1 M16,1 L22,1 L22,7 M22,15 L22,21 L16,21 M7,21 L1,21 L1,15" fill="none" stroke="#161513" stroke-width="2.3"/></svg><svg style="left:491.7px;top:81.5px;" width="15.2" height="14.5"><path d="M0,0 L15.2,14.5 M15.2,0 L0,14.5" stroke="#161513" stroke-width="2.3"/></svg><div class="t" style="left:76.05px;top:115.35px;font-size:22.49px;line-height:22.49px;font-weight:400;color:#1b5c82;transform:scaleY(0.982);transform-origin:0 19.05px;-webkit-text-stroke:0.36px #1b5c82;">RA-0000-1 (000)</div><div class="t" style="left:253.58px;top:116.68px;font-size:20.92px;line-height:20.92px;font-weight:400;color:#161513;transform:scaleY(1.042);transform-origin:0 17.72px;-webkit-text-stroke:0.33px #161513;">Revision A</div><div class="a" style="left:365.6px;top:112.6px;width:87.3px;height:31.1px;background:#1c6e95;border-radius:16px"></div><div class="t" style="left:379.43px;top:119.23px;font-size:17.44px;line-height:17.44px;font-weight:700;color:#ffffff;transform:scaleY(1.058);transform-origin:0 14.77px;">Design</div><div class="t" style="left:76.85px;top:158.87px;font-size:15.75px;line-height:15.75px;font-weight:700;color:#161513;transform:scaleY(0.978);transform-origin:0 13.33px;">Description:</div><div class="t" style="left:170.67px;top:158.46px;font-size:16.22px;line-height:16.22px;font-weight:400;color:#161513;transform:scaleY(0.950);transform-origin:0 13.74px;-webkit-text-stroke:0.26px #161513;">RA-000-1 Robotic Ma…</div><div class="t" style="left:356.23px;top:158.66px;font-size:15.99px;line-height:15.99px;font-weight:700;color:#161513;transform:scaleY(0.963);transform-origin:0 13.54px;">Primary Unit of</div><div class="t" style="left:76.84px;top:179.74px;font-size:15.90px;line-height:15.90px;font-weight:700;color:#161513;transform:scaleY(0.969);transform-origin:0 13.46px;">Measure:</div><div class="t" style="left:148.60px;top:180.81px;font-size:14.63px;line-height:14.63px;font-weight:400;color:#161513;transform:scaleY(1.053);transform-origin:0 12.39px;-webkit-text-stroke:0.23px #161513;">Ea</div><div class="a" style="left:77px;top:222px;width:437px;height:46.5px;border:1.5px solid #c5c2be;border-radius:7px;background:#fbfaf9"></div><div class="t" style="left:97.96px;top:235.63px;font-size:20.63px;line-height:20.63px;font-weight:400;color:#6f6c68;transform:scaleY(1.050);transform-origin:0 17.47px;-webkit-text-stroke:0.33px #6f6c68;">Search</div><svg style="left:466.4px;top:233px;" width="24" height="24"><circle cx="9.84" cy="9.84" r="8.64" fill="none" stroke="#161513" stroke-width="2.4"/><path d="M16.0608,16.0608 L23.5,23.5" stroke="#161513" stroke-width="2.6"/></svg><svg style="left:69.7px;top:302.3px;" width="17.5" height="9.7"><path d="M1,1 L8.75,8.7 L16.5,1" fill="none" stroke="#161513" stroke-width="2.4"/></svg><div class="t" style="left:99.83px;top:295.97px;font-size:21.30px;line-height:21.30px;font-weight:400;color:#161513;-webkit-text-stroke:0.34px #161513;">Structure ( Primary )</div><div class="t" style="left:76.43px;top:347.55px;font-size:21.09px;line-height:21.09px;font-weight:400;color:#161513;transform:scaleY(1.041);transform-origin:0 17.85px;-webkit-text-stroke:0.34px #161513;">Copy details</div><div class="a" style="left:221px;top:342px;width:47px;height:26px;background:#2a7ea6;border:1.5px solid #236f93;border-radius:9px"></div><div class="a" style="left:244.2px;top:344.4px;width:22px;height:22px;background:#ffffff;border-radius:7px"></div><div class="a" style="left:79.6px;top:397.6px;width:20.6px;height:20.2px;border:2px solid #161513;border-radius:3px"></div><div class="t" style="left:135.31px;top:397.45px;font-size:20.72px;line-height:20.72px;font-weight:700;color:#161513;transform:scaleY(0.954);transform-origin:0 17.55px;">Items</div><svg style="left:198.9px;top:399.4px;" width="13" height="17"><path d="M2,6 L6.5,1.5 L11,6 M2,11 L6.5,15.5 L11,11" fill="none" stroke="#161513" stroke-width="2.1"/></svg><div class="a" style="left:67px;top:436.9px;width:458px;height:1px;background:#e6e3df"></div><div class="a" style="left:67px;top:493.33px;width:458px;height:1px;background:#e6e3df"></div><div class="a" style="left:79.6px;top:455.9px;width:20.6px;height:20.2px;border:2px solid #161513;border-radius:3px"></div><div class="t" style="left:172.19px;top:451.20px;font-size:22.20px;line-height:22.20px;font-weight:400;color:#1b5c82;transform:scaleY(1.028);transform-origin:0 18.80px;-webkit-text-stroke:0.36px #1b5c82;">SS-M2-5</div><div class="a" style="left:67px;top:549.76px;width:458px;height:1px;background:#e6e3df"></div><div class="a" style="left:79.6px;top:512.3299999999999px;width:20.6px;height:20.2px;border:2px solid #161513;border-radius:3px"></div><div class="t" style="left:172.08px;top:507.63px;font-size:22.20px;line-height:22.20px;font-weight:400;color:#1b5c82;transform:scaleY(1.028);transform-origin:0 18.80px;-webkit-text-stroke:0.36px #1b5c82;">Gbox-10-1</div><div class="a" style="left:67px;top:606.1899999999999px;width:458px;height:1px;background:#e6e3df"></div><div class="a" style="left:79.6px;top:568.76px;width:20.6px;height:20.2px;border:2px solid #161513;border-radius:3px"></div><div class="t" style="left:172.19px;top:564.06px;font-size:22.20px;line-height:22.20px;font-weight:400;color:#1b5c82;transform:scaleY(1.028);transform-origin:0 18.80px;-webkit-text-stroke:0.36px #1b5c82;">SRX8115</div><svg style="left:152.6px;top:576.46px;" width="8" height="15"><polygon points="0,0 7.6,7.4 0,14.8" fill="#161513"/></svg><div class="a" style="left:67px;top:662.6199999999999px;width:458px;height:1px;background:#e6e3df"></div><div class="a" style="left:79.6px;top:625.1899999999999px;width:20.6px;height:20.2px;border:2px solid #161513;border-radius:3px"></div><div class="t" style="left:173.10px;top:620.49px;font-size:22.20px;line-height:22.20px;font-weight:400;color:#1b5c82;transform:scaleY(1.028);transform-origin:0 18.80px;-webkit-text-stroke:0.36px #1b5c82;">WR807947</div><svg style="left:149.9px;top:637.1899999999999px;" width="16" height="9"><polygon points="0,0 15.5,0 7.75,7.6" fill="#161513"/></svg><div class="a" style="left:67px;top:719.05px;width:458px;height:1px;background:#e6e3df"></div><div class="a" style="left:79.6px;top:681.62px;width:20.6px;height:20.2px;border:2px solid #161513;border-radius:3px"></div><div class="t" style="left:193.09px;top:676.92px;font-size:22.20px;line-height:22.20px;font-weight:400;color:#1b5c82;transform:scaleY(1.028);transform-origin:0 18.80px;-webkit-text-stroke:0.36px #1b5c82;">SB4880003</div><svg style="left:170.8px;top:693.62px;" width="16" height="9"><polygon points="0,0 15.5,0 7.75,7.6" fill="#161513"/></svg><div class="a" style="left:67px;top:775.4799999999999px;width:458px;height:1px;background:#e6e3df"></div><div class="a" style="left:79.6px;top:738.05px;width:20.6px;height:20.2px;border:2px solid #161513;border-radius:3px"></div><div class="t" style="left:213.87px;top:733.35px;font-size:22.20px;line-height:22.20px;font-weight:400;color:#1b5c82;transform:scaleY(1.028);transform-origin:0 18.80px;-webkit-text-stroke:0.36px #1b5c82;">CM4800119</div><div class="a" style="left:67px;top:831.91px;width:458px;height:1px;background:#e6e3df"></div><div class="a" style="left:79.6px;top:794.48px;width:20.6px;height:20.2px;border:2px solid #161513;border-radius:3px"></div><div class="t" style="left:213.87px;top:789.78px;font-size:22.20px;line-height:22.20px;font-weight:400;color:#1b5c82;transform:scaleY(1.028);transform-origin:0 18.80px;-webkit-text-stroke:0.36px #1b5c82;">CM4800120</div><div class="a" style="left:67px;top:888.3399999999999px;width:458px;height:1px;background:#e6e3df"></div><div class="a" style="left:79.6px;top:850.91px;width:20.6px;height:20.2px;border:2px solid #161513;border-radius:3px"></div><div class="t" style="left:213.87px;top:846.21px;font-size:22.20px;line-height:22.20px;font-weight:400;color:#1b5c82;transform:scaleY(1.028);transform-origin:0 18.80px;-webkit-text-stroke:0.36px #1b5c82;">CM4800121</div><div class="a" style="left:67px;top:944.7699999999999px;width:458px;height:1px;background:#e6e3df"></div><div class="a" style="left:79.6px;top:907.3399999999999px;width:20.6px;height:20.2px;border:2px solid #161513;border-radius:3px"></div><div class="t" style="left:213.87px;top:902.64px;font-size:22.20px;line-height:22.20px;font-weight:400;color:#1b5c82;transform:scaleY(1.028);transform-origin:0 18.80px;-webkit-text-stroke:0.36px #1b5c82;">CM4800122</div><div class="a" style="left:67px;top:1001.1999999999999px;width:458px;height:1px;background:#e6e3df"></div><div class="a" style="left:79.6px;top:963.77px;width:20.6px;height:20.2px;border:2px solid #161513;border-radius:3px"></div><div class="t" style="left:213.87px;top:959.07px;font-size:22.20px;line-height:22.20px;font-weight:400;color:#1b5c82;transform:scaleY(1.028);transform-origin:0 18.80px;-webkit-text-stroke:0.36px #1b5c82;">CM4800123</div><div class="a" style="left:67px;top:1057.6299999999999px;width:458px;height:1px;background:#e6e3df"></div><div class="a" style="left:79.6px;top:1020.1999999999999px;width:20.6px;height:20.2px;border:2px solid #161513;border-radius:3px"></div><div class="t" style="left:171.38px;top:1015.50px;font-size:22.20px;line-height:22.20px;font-weight:400;color:#1b5c82;transform:scaleY(1.028);transform-origin:0 18.80px;-webkit-text-stroke:0.36px #1b5c82;">RA-300-5702</div><svg style="left:152.6px;top:1027.8999999999999px;" width="8" height="15"><polygon points="0,0 7.6,7.4 0,14.8" fill="#161513"/></svg><div class="a" style="left:67px;top:1114.0600000000002px;width:458px;height:1px;background:#e6e3df"></div><div class="a" style="left:79.6px;top:1076.63px;width:20.6px;height:20.2px;border:2px solid #161513;border-radius:3px"></div><div class="t" style="left:172.19px;top:1071.93px;font-size:22.20px;line-height:22.20px;font-weight:400;color:#1b5c82;transform:scaleY(1.028);transform-origin:0 18.80px;-webkit-text-stroke:0.36px #1b5c82;">STEP-00-3</div><svg style="left:152.6px;top:1084.3300000000002px;" width="8" height="15"><polygon points="0,0 7.6,7.4 0,14.8" fill="#161513"/></svg><div class="a" style="left:67px;top:1170.49px;width:458px;height:1px;background:#e6e3df"></div><div class="a" style="left:79.6px;top:1133.06px;width:20.6px;height:20.2px;border:2px solid #161513;border-radius:3px"></div><div class="t" style="left:172.19px;top:1128.36px;font-size:22.20px;line-height:22.20px;font-weight:400;color:#1b5c82;transform:scaleY(1.028);transform-origin:0 18.80px;-webkit-text-stroke:0.36px #1b5c82;">SCRM5-14X</div><div class="a" style="left:67px;top:1226.92px;width:458px;height:1px;background:#e6e3df"></div><div class="a" style="left:79.6px;top:1189.49px;width:20.6px;height:20.2px;border:2px solid #161513;border-radius:3px"></div><div class="t" style="left:172.19px;top:1184.79px;font-size:22.20px;line-height:22.20px;font-weight:400;color:#1b5c82;transform:scaleY(1.028);transform-origin:0 18.80px;-webkit-text-stroke:0.36px #1b5c82;">SCM8X-65A</div><div class="a" style="left:67px;top:1283.3500000000001px;width:458px;height:1px;background:#e6e3df"></div><div class="a" style="left:79.6px;top:1245.92px;width:20.6px;height:20.2px;border:2px solid #161513;border-radius:3px"></div><div class="t" style="left:172.19px;top:1241.22px;font-size:22.20px;line-height:22.20px;font-weight:400;color:#1b5c82;transform:scaleY(1.028);transform-origin:0 18.80px;-webkit-text-stroke:0.36px #1b5c82;">SCR-M330</div><div class="a" style="left:67px;top:1339.78px;width:458px;height:1px;background:#e6e3df"></div><div class="a" style="left:79.6px;top:1302.35px;width:20.6px;height:20.2px;border:2px solid #161513;border-radius:3px"></div><div class="t" style="left:172.19px;top:1297.65px;font-size:22.20px;line-height:22.20px;font-weight:400;color:#1b5c82;transform:scaleY(1.028);transform-origin:0 18.80px;-webkit-text-stroke:0.36px #1b5c82;">STEP-00-1</div><svg style="left:152.6px;top:1310.05px;" width="8" height="15"><polygon points="0,0 7.6,7.4 0,14.8" fill="#161513"/></svg><div class="a" style="left:67px;top:1396.21px;width:458px;height:1px;background:#e6e3df"></div><div class="a" style="left:79.6px;top:1358.78px;width:20.6px;height:20.2px;border:2px solid #161513;border-radius:3px"></div><div class="t" style="left:171.38px;top:1354.08px;font-size:22.20px;line-height:22.20px;font-weight:400;color:#1b5c82;transform:scaleY(1.028);transform-origin:0 18.80px;-webkit-text-stroke:0.36px #1b5c82;">M3X-16SC</div><div class="a" style="left:67px;top:1452.64px;width:458px;height:1px;background:#e6e3df"></div><div class="a" style="left:79.6px;top:1415.21px;width:20.6px;height:20.2px;border:2px solid #161513;border-radius:3px"></div><div class="t" style="left:171.38px;top:1410.51px;font-size:22.20px;line-height:22.20px;font-weight:400;color:#1b5c82;transform:scaleY(1.028);transform-origin:0 18.80px;-webkit-text-stroke:0.36px #1b5c82;">RA-100-4560</div><svg style="left:152.6px;top:1422.91px;" width="8" height="15"><polygon points="0,0 7.6,7.4 0,14.8" fill="#161513"/></svg><svg style="left:594.6px;top:94.8px;" width="61.1" height="61.1"><polygon points="30.50,0.00 47.10,7.90 47.10,21.80 61.10,29.20 61.10,47.60 44.10,55.90 30.50,48.90 16.50,55.90 0.00,47.60 0.00,29.20 13.50,21.80 13.50,7.90" fill="#e9e8e8"/><polygon points="24.40,10.50 30.50,7.40 36.60,10.50 30.50,13.50" fill="#325257"/><polygon points="20.00,16.20 27.00,19.70 27.00,25.80 20.00,22.30" fill="#325257"/><polygon points="33.60,19.70 40.60,16.20 40.60,22.30 33.60,25.80" fill="#325257"/><polygon points="10.40,31.40 16.50,28.40 22.70,31.40 16.50,34.50" fill="#325257"/><polygon points="6.50,37.10 13.30,40.60 13.30,47.20 6.50,43.70" fill="#325257"/><polygon points="20.00,40.60 27.00,37.10 27.00,43.70 20.00,47.20" fill="#325257"/><polygon points="38.20,31.40 44.10,28.40 50.20,31.40 44.10,34.50" fill="#325257"/><polygon points="33.60,37.10 40.60,40.60 40.60,47.20 33.60,43.70" fill="#325257"/><polygon points="47.50,40.60 54.50,37.10 54.50,43.70 47.50,47.20" fill="#325257"/></svg><div class="t" style="left:680.14px;top:90.14px;font-size:39.76px;line-height:39.76px;font-weight:700;color:#ffffff;">RA-0000-1</div><div class="a" style="left:903.7px;top:88.3px;width:388px;height:41.9px;background:#3f6267;border-radius:6px"></div><div class="t" style="left:912.65px;top:91.87px;font-size:37.24px;line-height:37.24px;font-weight:400;color:#ffffff;transform:scaleY(1.031);transform-origin:0 31.53px;-webkit-text-stroke:0.60px #ffffff;">Revision A - Current</div><svg style="left:1256px;top:106px;" width="18" height="9.3"><path d="M1,1 L9.0,8.3 L17,1" fill="none" stroke="#ffffff" stroke-width="2.6"/></svg><div class="a" style="left:1298.9px;top:93px;width:87.4px;height:32px;background:#6ba8c7;border-radius:16px"></div><div class="t" style="left:1313.48px;top:99.60px;font-size:18.54px;line-height:18.54px;font-weight:400;color:#161513;transform:scaleY(0.941);transform-origin:0 15.70px;-webkit-text-stroke:0.30px #161513;">Design</div><div class="t" style="left:681.62px;top:140.66px;font-size:17.65px;line-height:17.65px;font-weight:700;color:#ffffff;transform:scaleY(1.120);transform-origin:0 14.94px;">RA-000-1 Robotic Manipulators testing assembly</div><div class="t" style="left:586.95px;top:190.65px;font-size:17.89px;line-height:17.89px;font-weight:400;color:#ffffff;transform:scaleY(1.072);transform-origin:0 15.15px;-webkit-text-stroke:0.29px #ffffff;">Item Class</div><div class="t" style="left:681.03px;top:190.94px;font-size:17.55px;line-height:17.55px;font-weight:700;color:#ffffff;transform:scaleY(1.093);transform-origin:0 14.86px;">Robotic Manipulators</div><div class="t" style="left:889.91px;top:190.27px;font-size:18.34px;line-height:18.34px;font-weight:400;color:#ffffff;transform:scaleY(1.046);transform-origin:0 15.53px;-webkit-text-stroke:0.29px #ffffff;">Item Status</div><div class="t" style="left:993.57px;top:191.12px;font-size:17.33px;line-height:17.33px;font-weight:700;color:#ffffff;transform:scaleY(1.107);transform-origin:0 14.68px;">Active</div><div class="t" style="left:1076.62px;top:190.03px;font-size:18.62px;line-height:18.62px;font-weight:400;color:#ffffff;transform:scaleY(1.030);transform-origin:0 15.77px;-webkit-text-stroke:0.30px #ffffff;">Organization</div><div class="t" style="left:1191.50px;top:188.63px;font-size:20.28px;line-height:20.28px;font-weight:700;color:#ffffff;transform:scaleY(0.946);transform-origin:0 17.17px;">000</div><div class="t" style="left:1255.96px;top:190.38px;font-size:18.22px;line-height:18.22px;font-weight:400;color:#ffffff;transform:scaleY(1.053);transform-origin:0 15.42px;-webkit-text-stroke:0.29px #ffffff;">Approval Status</div><div class="t" style="left:1394.06px;top:190.91px;font-size:17.59px;line-height:17.59px;font-weight:700;color:#ffffff;transform:scaleY(1.091);transform-origin:0 14.89px;">Approved</div><svg style="left:1895px;top:110px;" width="30" height="9"><circle cx="3.5" cy="4.5" r="3.1" fill="#fff"/><circle cx="14.5" cy="4.5" r="3.1" fill="#fff"/><circle cx="25.5" cy="4.5" r="3.1" fill="#fff"/></svg><div class="a" style="left:1941px;top:92px;width:47.5px;height:46px;border:1.3px solid #9fb3b5;border-radius:7px"></div><div class="a" style="left:1998px;top:92px;width:47.5px;height:46px;border:1.3px solid #9fb3b5;border-radius:7px"></div><div class="a" style="left:2056px;top:92px;width:99px;height:46px;border:1.3px solid #9fb3b5;border-radius:7px"></div><div class="a" style="left:2166px;top:92px;width:167.5px;height:46px;border:1.3px solid #9fb3b5;border-radius:7px"></div><div class="a" style="left:2344px;top:91.5px;width:88.5px;height:47px;background:#ffffff;border-radius:7px"></div><svg style="left:1941px;top:92px;" width="47" height="46"><path d="M28.6,29.5 A9.6,9.6 0 1 1 30.2,20" fill="none" stroke="#fff" stroke-width="3"/><polygon points="25.5,24 36.5,24.5 31,30.5" fill="#fff"/></svg><svg style="left:2008.5px;top:101.5px;" width="27" height="27"><g transform="translate(13.6,13) rotate(-45)"><rect x="-3.6" y="-16" width="7.2" height="12.5" rx="3.6" fill="none" stroke="#ffffff" stroke-width="2.6"/><path d="M0,-12.8 L0,-6.8" stroke="#ffffff" stroke-width="2.21"/><path d="M-3.6,-3.6 L3.6,-3.6 L8.2,6.8 L-8.2,6.8 Z" fill="none" stroke="#ffffff" stroke-width="2.6" stroke-linejoin="miter"/><path d="M0,9.6 L0,12.8 M-5.2,9.6 L-6.2,12.4 M5.2,9.6 L6.2,12.4" stroke="#ffffff" stroke-width="2.6"/></g></svg><div class="t" style="left:2077.29px;top:107.43px;font-size:17.21px;line-height:17.21px;font-weight:700;color:#ffffff;transform:scaleY(1.183);transform-origin:0 14.57px;">Cancel</div><div class="t" style="left:2186.51px;top:107.62px;font-size:16.99px;line-height:16.99px;font-weight:700;color:#ffffff;transform:scaleY(1.198);transform-origin:0 14.38px;">Save and Close</div><div class="t" style="left:2370.92px;top:107.80px;font-size:16.77px;line-height:16.77px;font-weight:700;color:#161513;transform:scaleY(1.214);transform-origin:0 14.20px;">Save</div><div class="t" style="left:591.99px;top:286.12px;font-size:20.30px;line-height:20.30px;font-weight:700;color:#161513;transform:scaleY(1.074);transform-origin:0 17.18px;">Attributes</div><div class="t" style="left:736.39px;top:285.97px;font-size:20.46px;line-height:20.46px;font-weight:700;color:#4d4945;transform:scaleY(1.065);transform-origin:0 17.33px;">Attachments</div><svg style="left:871.3px;top:285px;" width="26.800000000000068" height="27"><path d="M4.8,2 Q0.6,12.8 4.8,23.6" fill="none" stroke="#4d4945" stroke-width="1.9"/><path d="M22.000000000000068,2 Q26.200000000000067,12.8 22.000000000000068,23.6" fill="none" stroke="#4d4945" stroke-width="1.9"/><circle cx="13.400000000000034" cy="12.6" r="6.3" fill="none" stroke="#4d4945" stroke-width="1.7"/><circle cx="13.400000000000034" cy="12.6" r="2.7" fill="#4d4945"/></svg><div class="t" style="left:946.61px;top:286.08px;font-size:20.34px;line-height:20.34px;font-weight:700;color:#4d4945;transform:scaleY(1.072);transform-origin:0 17.22px;">Structures</div><svg style="left:1058.3px;top:285px;" width="27.299999999999955" height="27"><path d="M4.8,2 Q0.6,12.8 4.8,23.6" fill="none" stroke="#4d4945" stroke-width="1.9"/><path d="M22.499999999999954,2 Q26.699999999999953,12.8 22.499999999999954,23.6" fill="none" stroke="#4d4945" stroke-width="1.9"/><circle cx="13.649999999999977" cy="12.6" r="6.3" fill="none" stroke="#4d4945" stroke-width="1.7"/><circle cx="13.649999999999977" cy="12.6" r="2.7" fill="#4d4945"/></svg><div class="t" style="left:1134.68px;top:286.31px;font-size:20.07px;line-height:20.07px;font-weight:700;color:#4d4945;transform:scaleY(1.087);transform-origin:0 16.99px;">Changes</div><svg style="left:1229.5px;top:285px;" width="27.299999999999955" height="27"><path d="M4.8,2 Q0.6,12.8 4.8,23.6" fill="none" stroke="#4d4945" stroke-width="1.9"/><path d="M22.499999999999954,2 Q26.699999999999953,12.8 22.499999999999954,23.6" fill="none" stroke="#4d4945" stroke-width="1.9"/><circle cx="13.649999999999977" cy="12.6" r="6.3" fill="none" stroke="#4d4945" stroke-width="1.7"/><circle cx="13.649999999999977" cy="12.6" r="2.7" fill="#4d4945"/></svg><div class="t" style="left:1305.41px;top:286.60px;font-size:19.73px;line-height:19.73px;font-weight:700;color:#4d4945;transform:scaleY(1.105);transform-origin:0 16.70px;">Associations</div><svg style="left:1439.3px;top:285px;" width="26.5" height="27"><path d="M4.8,2 Q0.6,12.8 4.8,23.6" fill="none" stroke="#4d4945" stroke-width="1.9"/><path d="M21.7,2 Q25.9,12.8 21.7,23.6" fill="none" stroke="#4d4945" stroke-width="1.9"/><circle cx="13.25" cy="12.6" r="6.3" fill="none" stroke="#4d4945" stroke-width="1.7"/><circle cx="13.25" cy="12.6" r="2.7" fill="#4d4945"/></svg><div class="t" style="left:1514.57px;top:286.15px;font-size:20.25px;line-height:20.25px;font-weight:700;color:#4d4945;transform:scaleY(1.077);transform-origin:0 17.15px;">Categories</div><svg style="left:1630.3px;top:285px;" width="27.200000000000045" height="27"><path d="M4.8,2 Q0.6,12.8 4.8,23.6" fill="none" stroke="#4d4945" stroke-width="1.9"/><path d="M22.400000000000045,2 Q26.600000000000044,12.8 22.400000000000045,23.6" fill="none" stroke="#4d4945" stroke-width="1.9"/><circle cx="13.600000000000023" cy="12.6" r="6.3" fill="none" stroke="#4d4945" stroke-width="1.7"/><circle cx="13.600000000000023" cy="12.6" r="2.7" fill="#4d4945"/></svg><div class="t" style="left:1705.66px;top:286.31px;font-size:20.07px;line-height:20.07px;font-weight:700;color:#4d4945;transform:scaleY(1.087);transform-origin:0 16.99px;">Relationships</div><svg style="left:1848.3px;top:285px;" width="27.299999999999955" height="27"><path d="M4.8,2 Q0.6,12.8 4.8,23.6" fill="none" stroke="#4d4945" stroke-width="1.9"/><path d="M22.499999999999954,2 Q26.699999999999953,12.8 22.499999999999954,23.6" fill="none" stroke="#4d4945" stroke-width="1.9"/><circle cx="13.649999999999977" cy="12.6" r="6.3" fill="none" stroke="#4d4945" stroke-width="1.7"/><circle cx="13.649999999999977" cy="12.6" r="2.7" fill="#4d4945"/></svg><div class="t" style="left:1924.48px;top:286.03px;font-size:20.39px;line-height:20.39px;font-weight:700;color:#4d4945;transform:scaleY(1.069);transform-origin:0 17.27px;">Where Used</div><svg style="left:2052.7px;top:285px;" width="26.800000000000182" height="27"><path d="M4.8,2 Q0.6,12.8 4.8,23.6" fill="none" stroke="#4d4945" stroke-width="1.9"/><path d="M22.00000000000018,2 Q26.20000000000018,12.8 22.00000000000018,23.6" fill="none" stroke="#4d4945" stroke-width="1.9"/><circle cx="13.400000000000091" cy="12.6" r="6.3" fill="none" stroke="#4d4945" stroke-width="1.7"/><circle cx="13.400000000000091" cy="12.6" r="2.7" fill="#4d4945"/></svg><div class="t" style="left:2128.15px;top:285.70px;font-size:20.79px;line-height:20.79px;font-weight:700;color:#4d4945;transform:scaleY(1.049);transform-origin:0 17.60px;">Quality</div><div class="t" style="left:2246.22px;top:285.88px;font-size:20.57px;line-height:20.57px;font-weight:700;color:#4d4945;transform:scaleY(1.060);transform-origin:0 17.42px;">History</div><div class="a" style="left:589px;top:321px;width:1848px;height:1.2px;background:#e0ddd9"></div><div class="a" style="left:589px;top:318.5px;width:101.7px;height:3.5px;background:#161513;border-radius:2px 2px 0 0"></div><div class="a" style="left:589px;top:333px;width:1129px;height:47px;border:1.5px solid #c5c2be;border-radius:7px;background:#fbfaf9"></div><div class="t" style="left:609.36px;top:347.10px;font-size:20.67px;line-height:20.67px;font-weight:400;color:#6f6c68;transform:scaleY(1.048);transform-origin:0 17.50px;-webkit-text-stroke:0.33px #6f6c68;">Search</div><svg style="left:1676px;top:344px;" width="22" height="22"><circle cx="9.12" cy="9.12" r="7.92" fill="none" stroke="#161513" stroke-width="2.4"/><path d="M14.822399999999998,14.822399999999998 L21.5,21.5" stroke="#161513" stroke-width="2.6"/></svg><div class="a" style="left:2333px;top:333px;width:47px;height:47px;border:1.5px solid #bebbb7;border-radius:7px;background:#fbfaf9"></div><div class="a" style="left:2390px;top:333px;width:47px;height:47px;border:1.5px solid #bebbb7;border-radius:7px;background:#fbfaf9"></div><svg style="left:2343px;top:344px;" width="26" height="26"><path d="M3,23 L3,18 L17.5,3.5 L22.5,8.5 L8,23 Z M14.5,6.5 L19.5,11.5" fill="none" stroke="#161513" stroke-width="2.4" stroke-linejoin="round"/></svg><svg style="left:2400px;top:345px;" width="27" height="24"><path d="M1.5,11.5 C5,4.5 9,2.5 13.5,2.5 C18,2.5 22,4.5 25.5,11.5 C22,18.5 18,20.5 13.5,20.5 C9,20.5 5,18.5 1.5,11.5 Z" fill="none" stroke="#161513" stroke-width="2.5"/><circle cx="13.5" cy="11.5" r="4" fill="none" stroke="#161513" stroke-width="2.4"/></svg><div class="a" style="left:589px;top:390.7px;width:106.7px;height:41px;background:#2b80a8;border:1.5px solid #1c4254;border-radius:8px"></div><div class="t" style="left:598.73px;top:403.66px;font-size:17.89px;line-height:17.89px;font-weight:400;color:#f2f7fa;transform:scaleY(1.138);transform-origin:0 15.14px;-webkit-text-stroke:0.29px #f2f7fa;">Basic</div><div class="a" style="left:652.2px;top:401px;width:1.5px;height:20px;background:#a9cbdc"></div><svg style="left:665px;top:403px;" width="18.3" height="18"><path d="M0,0 L18.3,18 M18.3,0 L0,18" stroke="#cfe3ec" stroke-width="2.2"/></svg><div class="a" style="left:708.6px;top:390.4px;width:243.39999999999998px;height:42px;border:1.2px solid #dedbd7;border-radius:8px;background:#fbfaf9"></div><div class="t" style="left:718.93px;top:402.40px;font-size:19.14px;line-height:19.14px;font-weight:400;color:#161513;transform:scaleY(1.063);transform-origin:0 16.20px;-webkit-text-stroke:0.31px #161513;">Manufacturing Information</div><div class="a" style="left:965px;top:390.4px;width:141.5px;height:42px;border:1.2px solid #dedbd7;border-radius:8px;background:#fbfaf9"></div><div class="t" style="left:975.78px;top:403.25px;font-size:18.13px;line-height:18.13px;font-weight:400;color:#161513;transform:scaleY(1.123);transform-origin:0 15.35px;-webkit-text-stroke:0.29px #161513;">Characteristics</div><div class="a" style="left:1120px;top:390.4px;width:164px;height:42px;border:1.2px solid #dedbd7;border-radius:8px;background:#fbfaf9"></div><div class="t" style="left:1130.16px;top:402.98px;font-size:18.44px;line-height:18.44px;font-weight:400;color:#161513;transform:scaleY(1.103);transform-origin:0 15.62px;-webkit-text-stroke:0.30px #161513;">Sales Information</div><div class="a" style="left:1298px;top:390.4px;width:142px;height:42px;border:1.2px solid #dedbd7;border-radius:8px;background:#fbfaf9"></div><div class="t" style="left:1307.71px;top:402.16px;font-size:19.42px;line-height:19.42px;font-weight:400;color:#161513;transform:scaleY(1.048);transform-origin:0 16.44px;-webkit-text-stroke:0.31px #161513;">Manufacturing</div><div class="a" style="left:1454.5px;top:390.4px;width:156.5px;height:42px;border:1.2px solid #dedbd7;border-radius:8px;background:#fbfaf9"></div><div class="t" style="left:1463.28px;top:402.81px;font-size:18.65px;line-height:18.65px;font-weight:400;color:#161513;transform:scaleY(1.091);transform-origin:0 15.79px;-webkit-text-stroke:0.30px #161513;">Industrial Details</div><div class="a" style="left:1625px;top:390.4px;width:94px;height:42px;border:1.2px solid #dedbd7;border-radius:8px;background:#fbfaf9"></div><div class="t" style="left:1635.25px;top:402.57px;font-size:18.93px;line-height:18.93px;font-weight:400;color:#161513;transform:scaleY(1.075);transform-origin:0 16.03px;-webkit-text-stroke:0.30px #161513;">Planning</div><div class="a" style="left:1733px;top:390.4px;width:171px;height:42px;border:1.2px solid #dedbd7;border-radius:8px;background:#fbfaf9"></div><div class="t" style="left:1742.49px;top:403.01px;font-size:18.42px;line-height:18.42px;font-weight:400;color:#161513;transform:scaleY(1.105);transform-origin:0 15.59px;-webkit-text-stroke:0.29px #161513;">Physical Attributes</div><div class="a" style="left:1917px;top:390.4px;width:71px;height:42px;border:1.2px solid #dedbd7;border-radius:8px;background:#fbfaf9"></div><div class="t" style="left:1927.07px;top:402.77px;font-size:18.70px;line-height:18.70px;font-weight:400;color:#161513;transform:scaleY(1.088);transform-origin:0 15.83px;-webkit-text-stroke:0.30px #161513;">Filters</div><div class="t" style="left:2022.86px;top:403.36px;font-size:18.00px;line-height:18.00px;font-weight:700;color:#161513;transform:scaleY(1.130);transform-origin:0 15.24px;">Clear (1)</div><div class="a" style="left:589px;top:458.5px;width:1848px;height:1100px;background:#fbfaf9;border:1px solid #e4e1dd;border-radius:9px;box-shadow:0 1px 4px rgba(0,0,0,0.08)"></div><div class="a" style="left:590px;top:537.5px;width:1846px;height:1.5px;background:#e8e5e1"></div><div class="t" style="left:620.36px;top:486.96px;font-size:24.49px;line-height:24.49px;font-weight:700;color:#161513;transform:scaleY(1.139);transform-origin:0 20.74px;-webkit-text-stroke:0.35px #161513;">Basic</div><div class="t" style="left:626.26px;top:569.94px;font-size:26.05px;line-height:26.05px;font-weight:700;color:#161513;transform:scaleY(1.077);transform-origin:0 22.06px;-webkit-text-stroke:0.35px #161513;">Descriptions</div><div class="t" style="left:689.21px;top:628.00px;font-size:16.89px;line-height:16.89px;font-weight:400;color:#4e4a46;transform:scaleY(0.929);transform-origin:0 14.30px;-webkit-text-stroke:0.45px #4e4a46;">Description</div><div class="t" style="left:688.84px;top:651.03px;font-size:21.46px;line-height:21.46px;font-weight:400;color:#161513;transform:scaleY(1.016);transform-origin:0 18.17px;-webkit-text-stroke:0.34px #161513;">RA-000-1 Robotic Manipulators testing assembly</div><div class="t" style="left:1528.03px;top:628.13px;font-size:16.73px;line-height:16.73px;font-weight:400;color:#4e4a46;transform:scaleY(0.938);transform-origin:0 14.17px;-webkit-text-stroke:0.45px #4e4a46;">Long Description</div><div class="t" style="left:1527.65px;top:651.09px;font-size:21.39px;line-height:21.39px;font-weight:400;color:#161513;transform:scaleY(1.019);transform-origin:0 18.11px;-webkit-text-stroke:0.34px #161513;">Next Generation robotic manipulators assembly.</div><div class="t" style="left:689.03px;top:717.60px;font-size:19.13px;line-height:19.13px;font-weight:400;color:#161513;transform:scaleY(0.942);transform-origin:0 16.20px;-webkit-text-stroke:0.65px #161513;">Formatted Description</div><div class="t" style="left:709.60px;top:754.47px;font-size:53.78px;line-height:53.78px;font-weight:700;color:#161513;transform:scaleY(1.032);transform-origin:0 45.53px;-webkit-text-stroke:1.1px #161513;">Product Description</div><div class="t" style="left:711.16px;top:838.67px;font-size:21.30px;line-height:21.30px;color:#161513;word-spacing:-0.11px;transform:scaleY(1.044);transform-origin:0 18.03px;-webkit-text-stroke:0.34px #161513;">Are you tired of <b style="-webkit-text-stroke:0">inefficient</b> and <b style="-webkit-text-stroke:0">costly manual operations</b>? Meet the revolutionary <b style="-webkit-text-stroke:0">RA-000-1 Robotic Manipulators</b> - the ultimate solution for your <b style="-webkit-text-stroke:0">testing</b> and</div><div class="t" style="left:710.58px;top:864.67px;font-size:21.30px;line-height:21.30px;color:#161513;word-spacing:-1.10px;transform:scaleY(1.044);transform-origin:0 18.03px;-webkit-text-stroke:0.34px #161513;"><b style="-webkit-text-stroke:0">assembly</b> needs! With <b style="-webkit-text-stroke:0">unparalleled precision</b>, these <b style="-webkit-text-stroke:0">manipulators</b> are designed to <b style="-webkit-text-stroke:0">boost productivity</b> and <b style="-webkit-text-stroke:0">optimize</b> your workflow. <b style="-webkit-text-stroke:0">Engineered for versatility</b>, the</div><div class="t" style="left:709.45px;top:891.37px;font-size:21.30px;line-height:21.30px;color:#161513;word-spacing:-1.51px;transform:scaleY(1.044);transform-origin:0 18.03px;-webkit-text-stroke:0.34px #161513;">RA-000-1 excels in various applications, from <b style="-webkit-text-stroke:0">complex assembly lines</b> to <b style="-webkit-text-stroke:0">delicate testing procedures</b>. Its <b style="-webkit-text-stroke:0">sophisticated software</b> allows for <b style="-webkit-text-stroke:0">customized</b> and <b style="-webkit-text-stroke:0">precise</b></div><div class="t" style="left:709.80px;top:916.77px;font-size:21.30px;line-height:21.30px;color:#161513;word-spacing:-0.52px;transform:scaleY(1.044);transform-origin:0 18.03px;-webkit-text-stroke:0.34px #161513;"><b style="-webkit-text-stroke:0">movements</b>, ensuring <b style="-webkit-text-stroke:0">accurate</b> and <b style="-webkit-text-stroke:0">repetitive tasks</b>. Don&#x27;t settle for ordinary; elevate your <b style="-webkit-text-stroke:0">industrial</b> processes with the <b style="-webkit-text-stroke:0">cutting-edge</b> RA-000-1 Robotic Manipulators.</div><div class="t" style="left:710.01px;top:968.91px;font-size:53.61px;line-height:53.61px;font-weight:700;color:#161513;transform:scaleY(1.036);transform-origin:0 45.39px;-webkit-text-stroke:1.1px #161513;">Features</div><div class="a" style="left:745.3px;top:1065.4px;width:6.8px;height:6.4px;background:#161513"></div><div class="t" style="left:762.48px;top:1055.47px;font-size:21.30px;line-height:21.30px;color:#161513;word-spacing:-0.48px;transform:scaleY(1.044);transform-origin:0 18.03px;-webkit-text-stroke:0.34px #161513;"><b style="-webkit-text-stroke:0">Robotic Arms</b>: The RA-000-1 features advanced robotic arms that deliver unparalleled precision and efficiency in testing and assembly operations.</div><div class="t" style="left:626.20px;top:1117.11px;font-size:28.34px;line-height:28.34px;font-weight:700;color:#161513;transform:scaleY(0.985);transform-origin:0 23.99px;-webkit-text-stroke:0.35px #161513;">Main</div><div class="t" style="left:688.62px;top:1173.14px;font-size:16.02px;line-height:16.02px;font-weight:400;color:#4e4a46;-webkit-text-stroke:0.45px #4e4a46;">Item Class</div><div class="t" style="left:688.33px;top:1193.43px;font-size:21.57px;line-height:21.57px;font-weight:400;color:#161513;transform:scaleY(1.011);transform-origin:0 18.27px;-webkit-text-stroke:0.35px #161513;">Robotic Manipulators</div><div class="t" style="left:1024.58px;top:1172.72px;font-size:16.51px;line-height:16.51px;font-weight:400;color:#4e4a46;transform:scaleY(0.968);transform-origin:0 13.98px;-webkit-text-stroke:0.45px #4e4a46;">Item Status</div><div class="t" style="left:1026.06px;top:1193.58px;font-size:21.41px;line-height:21.41px;font-weight:400;color:#161513;transform:scaleY(1.019);transform-origin:0 18.12px;-webkit-text-stroke:0.34px #161513;">Active</div><div class="t" style="left:1360.09px;top:1173.16px;font-size:15.99px;line-height:15.99px;font-weight:400;color:#4e4a46;-webkit-text-stroke:0.45px #4e4a46;">Lifecycle Phase</div><div class="t" style="left:1359.63px;top:1193.43px;font-size:21.58px;line-height:21.58px;font-weight:400;color:#161513;transform:scaleY(1.010);transform-origin:0 18.27px;-webkit-text-stroke:0.35px #161513;">Design</div><div class="t" style="left:1695.69px;top:1173.20px;font-size:15.95px;line-height:15.95px;font-weight:400;color:#4e4a46;-webkit-text-stroke:0.45px #4e4a46;">Completeness Score</div><div class="t" style="left:2030.89px;top:1173.20px;font-size:15.94px;line-height:15.94px;font-weight:400;color:#4e4a46;-webkit-text-stroke:0.45px #4e4a46;">Created By</div><div class="t" style="left:2029.96px;top:1193.72px;font-size:21.23px;line-height:21.23px;font-weight:400;color:#161513;transform:scaleY(1.027);transform-origin:0 17.98px;-webkit-text-stroke:0.34px #161513;">Karen Curtis</div><div class="t" style="left:689.28px;top:1233.19px;font-size:16.20px;line-height:16.20px;font-weight:400;color:#4e4a46;transform:scaleY(0.987);transform-origin:0 13.71px;-webkit-text-stroke:0.45px #4e4a46;">Creation Date</div><div class="t" style="left:689.17px;top:1252.25px;font-size:23.21px;line-height:23.21px;font-weight:400;color:#161513;transform:scaleY(0.939);transform-origin:0 19.65px;-webkit-text-stroke:0.37px #161513;">5/2/25 10:36 PM</div><div class="t" style="left:1026.07px;top:1233.09px;font-size:16.31px;line-height:16.31px;font-weight:400;color:#4e4a46;transform:scaleY(0.980);transform-origin:0 13.81px;-webkit-text-stroke:0.45px #4e4a46;">Approval Status</div><div class="t" style="left:1026.06px;top:1253.76px;font-size:21.43px;line-height:21.43px;font-weight:400;color:#161513;transform:scaleY(1.018);transform-origin:0 18.14px;-webkit-text-stroke:0.34px #161513;">Approved</div><div class="t" style="left:1359.88px;top:1232.95px;font-size:16.48px;line-height:16.48px;font-weight:400;color:#4e4a46;transform:scaleY(0.970);transform-origin:0 13.95px;-webkit-text-stroke:0.45px #4e4a46;">Item Object Type</div><div class="t" style="left:1695.24px;top:1233.06px;font-size:16.34px;line-height:16.34px;font-weight:400;color:#4e4a46;transform:scaleY(0.978);transform-origin:0 13.84px;-webkit-text-stroke:0.45px #4e4a46;">User Item Type</div><div class="t" style="left:1694.75px;top:1253.85px;font-size:21.31px;line-height:21.31px;font-weight:400;color:#161513;transform:scaleY(1.023);transform-origin:0 18.05px;-webkit-text-stroke:0.34px #161513;">Finished Good</div><div class="t" style="left:2030.32px;top:1232.71px;font-size:16.76px;line-height:16.76px;font-weight:400;color:#4e4a46;transform:scaleY(0.954);transform-origin:0 14.19px;-webkit-text-stroke:0.45px #4e4a46;">Engineered</div><div class="t" style="left:2031.27px;top:1258.22px;font-size:19.70px;line-height:19.70px;font-weight:400;color:#161513;transform:scaleY(1.107);transform-origin:0 16.68px;-webkit-text-stroke:0.32px #161513;">Yes</div><div class="t" style="left:688.72px;top:1292.86px;font-size:16.82px;line-height:16.82px;font-weight:400;color:#4e4a46;transform:scaleY(0.951);transform-origin:0 14.24px;-webkit-text-stroke:0.45px #4e4a46;">Preliminary</div><div class="t" style="left:688.26px;top:1316.10px;font-size:22.44px;line-height:22.44px;font-weight:400;color:#161513;transform:scaleY(0.972);transform-origin:0 19.00px;-webkit-text-stroke:0.36px #161513;">No</div><div class="t" style="left:1024.79px;top:1293.57px;font-size:15.98px;line-height:15.98px;font-weight:400;color:#4e4a46;-webkit-text-stroke:0.45px #4e4a46;">Pack Type</div><div class="t" style="left:1024.32px;top:1313.68px;font-size:21.76px;line-height:21.76px;font-weight:400;color:#161513;-webkit-text-stroke:0.35px #161513;">Mixed Module</div><div class="t" style="left:625.92px;top:1377.30px;font-size:26.33px;line-height:26.33px;font-weight:700;color:#161513;transform:scaleY(1.060);transform-origin:0 22.30px;-webkit-text-stroke:0.35px #161513;">Unit of measures</div><div class="t" style="left:688.73px;top:1431.19px;font-size:16.66px;line-height:16.66px;font-weight:400;color:#4e4a46;transform:scaleY(0.960);transform-origin:0 14.11px;-webkit-text-stroke:0.45px #4e4a46;">Primary Unit of Measure</div><div class="t" style="left:688.52px;top:1453.68px;font-size:19.28px;line-height:19.28px;font-weight:400;color:#161513;transform:scaleY(1.131);transform-origin:0 16.32px;-webkit-text-stroke:0.31px #161513;">Ea</div><div class="t" style="left:1025.73px;top:1431.35px;font-size:16.48px;line-height:16.48px;font-weight:400;color:#4e4a46;transform:scaleY(0.970);transform-origin:0 13.95px;-webkit-text-stroke:0.45px #4e4a46;">Tracking Unit of Measure</div><div class="t" style="left:1024.31px;top:1451.48px;font-size:21.87px;line-height:21.87px;font-weight:400;color:#161513;-webkit-text-stroke:0.35px #161513;">Primary</div><div class="t" style="left:1359.99px;top:1430.69px;font-size:17.25px;line-height:17.25px;font-weight:400;color:#4e4a46;transform:scaleY(0.927);transform-origin:0 14.61px;-webkit-text-stroke:0.45px #4e4a46;">Pricing</div><div class="t" style="left:1359.61px;top:1451.48px;font-size:21.87px;line-height:21.87px;font-weight:400;color:#161513;-webkit-text-stroke:0.35px #161513;">Primary</div><div class="t" style="left:1695.76px;top:1431.43px;font-size:16.38px;line-height:16.38px;font-weight:400;color:#4e4a46;transform:scaleY(0.976);transform-origin:0 13.87px;-webkit-text-stroke:0.45px #4e4a46;">Secondary Unit of Measure</div><div class="t" style="left:2030.30px;top:1430.88px;font-size:17.03px;line-height:17.03px;font-weight:400;color:#4e4a46;transform:scaleY(0.939);transform-origin:0 14.42px;-webkit-text-stroke:0.45px #4e4a46;">Defaulting Control</div><div class="a" style="left:0;top:1480px;width:2500px;height:83px;background:#233a40;z-index:5"></div><div class="a" style="left:0;top:1480px;width:2500px;height:1px;background:#0d1417;z-index:6"></div><div class="a" style="left:530px;top:1481px;width:1px;height:82px;background:#3a5057;z-index:6"></div><div class="a" style="left:596px;top:1479px;width:248px;height:5px;background:#fbfaf9;border-radius:0 0 6px 6px;z-index:6"></div><svg style="left:67px;top:1510px;z-index:7;" width="25" height="25"><path d="M1.5,9 L11.5,1.5 L21.5,9 L21.5,22 L1.5,22 Z" fill="none" stroke="#c9d0d3" stroke-width="2.3"/></svg><svg style="left:364px;top:1511px;z-index:7;" width="23" height="23"><circle cx="9" cy="9" r="7.5" fill="none" stroke="#c9d0d3" stroke-width="2.3"/><path d="M14.5,14.5 L21,21" stroke="#c9d0d3" stroke-width="2.5"/></svg><svg style="z-index:7;left:600.4px;top:1511px;" width="21.8" height="21.8"><polygon points="10.88,0.00 16.80,2.82 16.80,7.78 21.80,10.42 21.80,16.98 15.73,19.94 10.88,17.45 5.89,19.94 0.00,16.98 0.00,10.42 4.82,7.78 4.82,2.82" fill="#e8e8e8"/><polygon points="8.71,3.75 10.88,2.64 13.06,3.75 10.88,4.82" fill="#233a40"/><polygon points="7.14,5.78 9.63,7.03 9.63,9.21 7.14,7.96" fill="#233a40"/><polygon points="11.99,7.03 14.49,5.78 14.49,7.96 11.99,9.21" fill="#233a40"/><polygon points="3.71,11.20 5.89,10.13 8.10,11.20 5.89,12.31" fill="#233a40"/><polygon points="2.32,13.24 4.75,14.49 4.75,16.84 2.32,15.59" fill="#233a40"/><polygon points="7.14,14.49 9.63,13.24 9.63,15.59 7.14,16.84" fill="#233a40"/><polygon points="13.63,11.20 15.73,10.13 17.91,11.20 15.73,12.31" fill="#233a40"/><polygon points="11.99,13.24 14.49,14.49 14.49,16.84 11.99,15.59" fill="#233a40"/><polygon points="16.95,14.49 19.45,13.24 19.45,15.59 16.95,16.84" fill="#233a40"/></svg><svg style="z-index:7;left:819px;top:1514px;" width="15.3" height="15"><path d="M0,0 L15.3,15 M15.3,0 L0,15" stroke="#ffffff" stroke-width="2.2"/></svg><div class="t" style="left:101.61px;top:1512.66px;font-size:20.83px;line-height:20.83px;font-weight:700;color:#c9d0d3;transform:scaleY(1.116);transform-origin:0 17.64px;z-index:7;">Product Management</div><div class="t" style="left:397.62px;top:1513.31px;font-size:20.06px;line-height:20.06px;font-weight:700;color:#c9d0d3;transform:scaleY(1.159);transform-origin:0 16.99px;z-index:7;">Search</div><div class="t" style="left:633.91px;top:1511.46px;font-size:22.26px;line-height:22.26px;font-weight:700;color:#ffffff;transform:scaleY(1.045);transform-origin:0 18.84px;z-index:7;">RA-0000-1 (000)</div><div class="a" style="left:2442.5px;top:1505.8px;width:57.5px;height:57.2px;background:#c53823;z-index:8"></div><svg style="left:2455px;top:1520px;z-index:9;" width="33" height="30"><path d="M3,0.5 L29,0.5 Q31.5,0.5 31.5,3 L31.5,21 Q31.5,23.5 29,23.5 L11,23.5 L4,29 Q1,30 1,27 L1,3 Q1,0.5 3,0.5 Z" fill="#fff"/><circle cx="7.3" cy="11.5" r="2.6" fill="#c53823"/><circle cx="16.3" cy="11.5" r="2.6" fill="#c53823"/><circle cx="25.4" cy="11.5" r="2.6" fill="#c53823"/></svg></body></html>
